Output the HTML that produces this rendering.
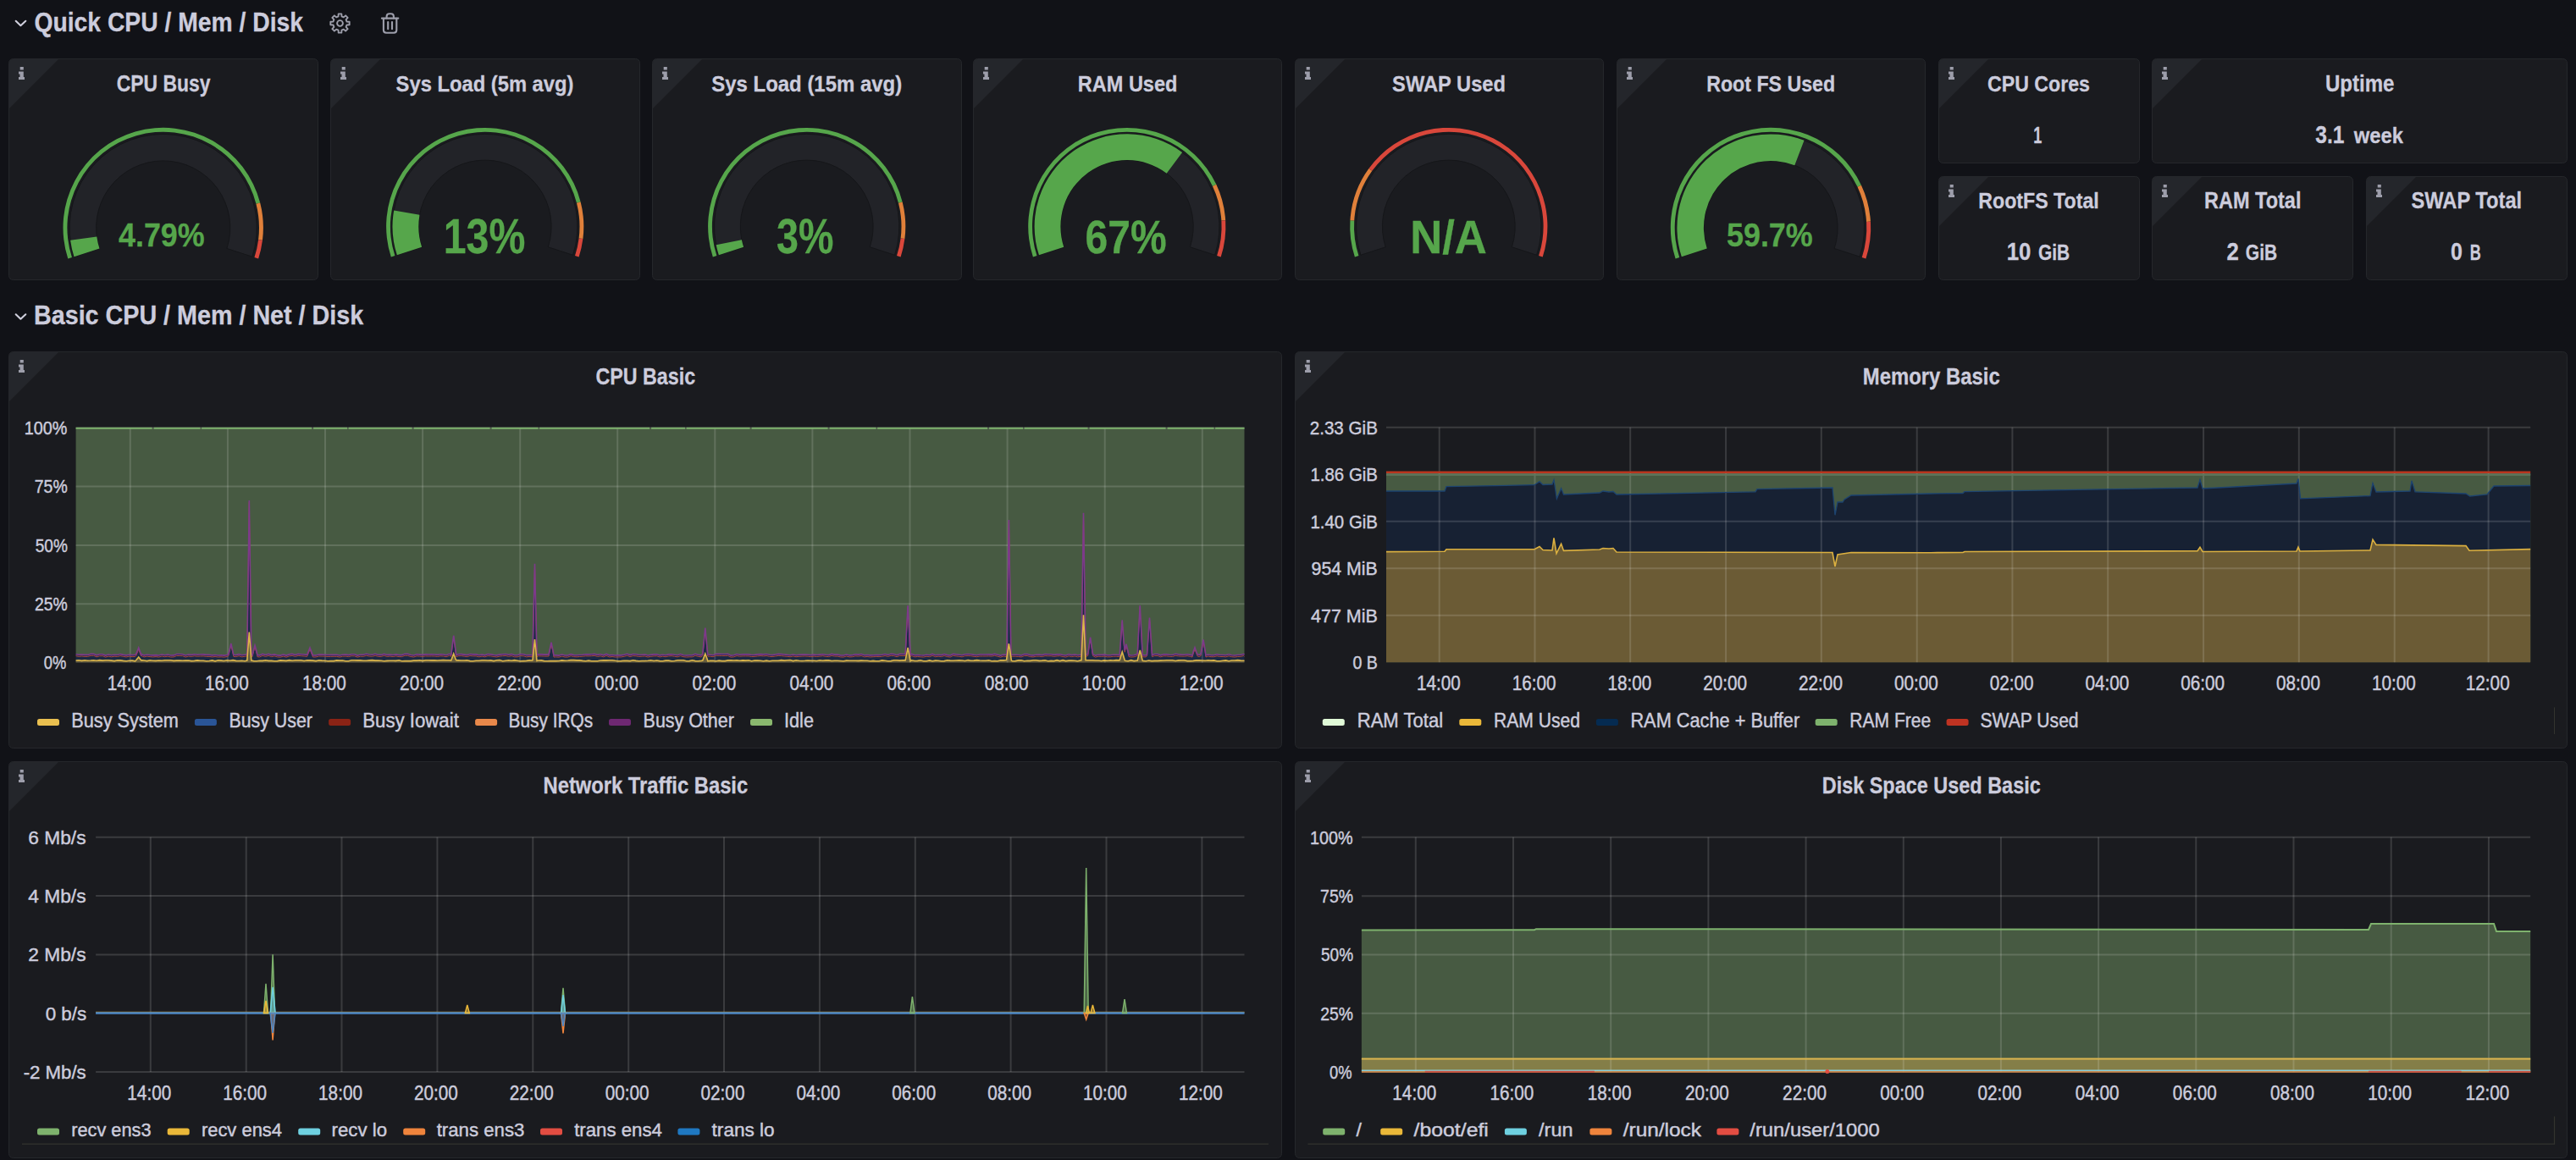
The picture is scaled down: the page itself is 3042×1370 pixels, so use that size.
<!DOCTYPE html>
<html><head><meta charset="utf-8"><style>
html,body{margin:0;padding:0;background:#111217;width:3042px;height:1370px;overflow:hidden}
svg{display:block;font-family:"Liberation Sans",sans-serif}
</style></head><body>
<svg width="3042" height="1370" viewBox="0 0 3042 1370">
<rect width="3042" height="1370" fill="#111217"/>
<path d="M18.7 24.8 L24.4 30.2 L30.3 24.8" fill="none" stroke="#d0d0de" stroke-width="2.1" stroke-linecap="round" stroke-linejoin="round"/>
<text transform="translate(40.40,37.00) scale(0.8975,1)" font-size="31.54" font-weight="bold" fill="#ccccdc" stroke="#ccccdc" stroke-width="0.3">Quick CPU / Mem / Disk</text>
<path d="M18.7 371.3 L24.4 376.7 L30.3 371.3" fill="none" stroke="#d0d0de" stroke-width="2.1" stroke-linecap="round" stroke-linejoin="round"/>
<text transform="translate(40.00,383.30) scale(0.9274,1)" font-size="30.96" font-weight="bold" fill="#ccccdc" stroke="#ccccdc" stroke-width="0.3">Basic CPU / Mem / Net / Disk</text>
<path d="M399.53 19.44 L399.70 16.34 L403.30 16.34 L403.47 19.44 L405.81 20.40 L408.12 18.34 L410.66 20.88 L408.60 23.19 L409.56 25.53 L412.66 25.70 L412.66 29.30 L409.56 29.47 L408.60 31.81 L410.66 34.12 L408.12 36.66 L405.81 34.60 L403.47 35.56 L403.30 38.66 L399.70 38.66 L399.53 35.56 L397.19 34.60 L394.88 36.66 L392.34 34.12 L394.40 31.81 L393.44 29.47 L390.34 29.30 L390.34 25.70 L393.44 25.53 L394.40 23.19 L392.34 20.88 L394.88 18.34 L397.19 20.40Z" fill="none" stroke="#9d9eab" stroke-width="1.9" stroke-linejoin="round"/>
<circle cx="401.5" cy="27.5" r="3.4" fill="none" stroke="#9d9eab" stroke-width="1.9"/>
<g fill="none" stroke="#9d9eab" stroke-width="2.1" stroke-linecap="round" stroke-linejoin="round"><path d="M450.9 21.6 H470.3"/><path d="M456.6 21.4 V19.5 Q456.6 16.3 459.8 16.3 H461.7 Q464.9 16.3 464.9 19.5 V21.4"/><path d="M452.9 21.8 V35.6 Q452.9 38.8 456.1 38.8 H465.1 Q468.3 38.8 468.3 35.6 V21.8"/><path d="M458.2 26 V34.2 M463 26 V34.2"/></g>
<rect x="10.5" y="69.5" width="365" height="261" rx="5" fill="#1a1b1f" stroke="#25272b" stroke-width="1"/>
<path d="M11 74 Q11 70 15 70 L69 70 L11 128 Z" fill="#24262b"/>
<path d="M23.7 79.1h4.1v3.3h-4.1z M22 84.5h5.8v6.5h1.2v3h-7v-3h1.5v-3.5h-1.5z" fill="#9d9eab"/>
<rect x="390.5" y="69.5" width="365" height="261" rx="5" fill="#1a1b1f" stroke="#25272b" stroke-width="1"/>
<path d="M391 74 Q391 70 395 70 L449 70 L391 128 Z" fill="#24262b"/>
<path d="M403.7 79.1h4.1v3.3h-4.1z M402 84.5h5.8v6.5h1.2v3h-7v-3h1.5v-3.5h-1.5z" fill="#9d9eab"/>
<rect x="770.5" y="69.5" width="365" height="261" rx="5" fill="#1a1b1f" stroke="#25272b" stroke-width="1"/>
<path d="M771 74 Q771 70 775 70 L829 70 L771 128 Z" fill="#24262b"/>
<path d="M783.7 79.1h4.1v3.3h-4.1z M782 84.5h5.8v6.5h1.2v3h-7v-3h1.5v-3.5h-1.5z" fill="#9d9eab"/>
<rect x="1149.5" y="69.5" width="364" height="261" rx="5" fill="#1a1b1f" stroke="#25272b" stroke-width="1"/>
<path d="M1150 74 Q1150 70 1154 70 L1208 70 L1150 128 Z" fill="#24262b"/>
<path d="M1162.7 79.1h4.1v3.3h-4.1z M1161 84.5h5.8v6.5h1.2v3h-7v-3h1.5v-3.5h-1.5z" fill="#9d9eab"/>
<rect x="1529.5" y="69.5" width="364" height="261" rx="5" fill="#1a1b1f" stroke="#25272b" stroke-width="1"/>
<path d="M1530 74 Q1530 70 1534 70 L1588 70 L1530 128 Z" fill="#24262b"/>
<path d="M1542.7 79.1h4.1v3.3h-4.1z M1541 84.5h5.8v6.5h1.2v3h-7v-3h1.5v-3.5h-1.5z" fill="#9d9eab"/>
<rect x="1909.5" y="69.5" width="364" height="261" rx="5" fill="#1a1b1f" stroke="#25272b" stroke-width="1"/>
<path d="M1910 74 Q1910 70 1914 70 L1968 70 L1910 128 Z" fill="#24262b"/>
<path d="M1922.7 79.1h4.1v3.3h-4.1z M1921 84.5h5.8v6.5h1.2v3h-7v-3h1.5v-3.5h-1.5z" fill="#9d9eab"/>
<rect x="2289.5" y="69.5" width="237" height="123" rx="5" fill="#1a1b1f" stroke="#25272b" stroke-width="1"/>
<path d="M2290 74 Q2290 70 2294 70 L2348 70 L2290 128 Z" fill="#24262b"/>
<path d="M2302.7 79.1h4.1v3.3h-4.1z M2301 84.5h5.8v6.5h1.2v3h-7v-3h1.5v-3.5h-1.5z" fill="#9d9eab"/>
<rect x="2541.5" y="69.5" width="490" height="123" rx="5" fill="#1a1b1f" stroke="#25272b" stroke-width="1"/>
<path d="M2542 74 Q2542 70 2546 70 L2600 70 L2542 128 Z" fill="#24262b"/>
<path d="M2554.7 79.1h4.1v3.3h-4.1z M2553 84.5h5.8v6.5h1.2v3h-7v-3h1.5v-3.5h-1.5z" fill="#9d9eab"/>
<rect x="2289.5" y="208.5" width="237" height="122" rx="5" fill="#1a1b1f" stroke="#25272b" stroke-width="1"/>
<path d="M2290 213 Q2290 209 2294 209 L2348 209 L2290 267 Z" fill="#24262b"/>
<path d="M2302.7 218.1h4.1v3.3h-4.1z M2301 223.5h5.8v6.5h1.2v3h-7v-3h1.5v-3.5h-1.5z" fill="#9d9eab"/>
<rect x="2541.5" y="208.5" width="237" height="122" rx="5" fill="#1a1b1f" stroke="#25272b" stroke-width="1"/>
<path d="M2542 213 Q2542 209 2546 209 L2600 209 L2542 267 Z" fill="#24262b"/>
<path d="M2554.7 218.1h4.1v3.3h-4.1z M2553 223.5h5.8v6.5h1.2v3h-7v-3h1.5v-3.5h-1.5z" fill="#9d9eab"/>
<rect x="2794.5" y="208.5" width="237" height="122" rx="5" fill="#1a1b1f" stroke="#25272b" stroke-width="1"/>
<path d="M2795 213 Q2795 209 2799 209 L2853 209 L2795 267 Z" fill="#24262b"/>
<path d="M2807.7 218.1h4.1v3.3h-4.1z M2806 223.5h5.8v6.5h1.2v3h-7v-3h1.5v-3.5h-1.5z" fill="#9d9eab"/>
<text transform="translate(137.80,107.70) scale(0.8515,1)" font-size="26.89" font-weight="bold" fill="#ccccdc" stroke="#ccccdc" stroke-width="0.3">CPU Busy</text>
<text transform="translate(467.60,107.50) scale(0.8985,1)" font-size="26.45" font-weight="bold" fill="#ccccdc" stroke="#ccccdc" stroke-width="0.3">Sys Load (5m avg)</text>
<text transform="translate(840.30,107.50) scale(0.9058,1)" font-size="26.45" font-weight="bold" fill="#ccccdc" stroke="#ccccdc" stroke-width="0.3">Sys Load (15m avg)</text>
<text transform="translate(1272.80,107.50) scale(0.8898,1)" font-size="26.45" font-weight="bold" fill="#ccccdc" stroke="#ccccdc" stroke-width="0.3">RAM Used</text>
<text transform="translate(1644.10,107.50) scale(0.8959,1)" font-size="26.45" font-weight="bold" fill="#ccccdc" stroke="#ccccdc" stroke-width="0.3">SWAP Used</text>
<text transform="translate(2015.20,107.50) scale(0.8771,1)" font-size="26.45" font-weight="bold" fill="#ccccdc" stroke="#ccccdc" stroke-width="0.3">Root FS Used</text>
<text transform="translate(2347.00,108.00) scale(0.8851,1)" font-size="26.16" font-weight="bold" fill="#ccccdc" stroke="#ccccdc" stroke-width="0.3">CPU Cores</text>
<text transform="translate(2745.90,108.10) scale(0.8670,1)" font-size="27.76" font-weight="bold" fill="#ccccdc" stroke="#ccccdc" stroke-width="0.3">Uptime</text>
<text transform="translate(2336.25,245.75) scale(0.8742,1)" font-size="26.53" font-weight="bold" fill="#ccccdc" stroke="#ccccdc" stroke-width="0.3">RootFS Total</text>
<text transform="translate(2603.00,246.20) scale(0.8469,1)" font-size="27.76" font-weight="bold" fill="#ccccdc" stroke="#ccccdc" stroke-width="0.3">RAM Total</text>
<text transform="translate(2847.50,245.75) scale(0.8691,1)" font-size="27.25" font-weight="bold" fill="#ccccdc" stroke="#ccccdc" stroke-width="0.3">SWAP Total</text>
<text transform="translate(2401.25,168.75) scale(0.6440,1)" font-size="27.98" font-weight="bold" fill="#ccccdc" stroke="#ccccdc" stroke-width="0.3">1</text>
<text transform="translate(2734.20,169.00) scale(0.8339,1)" font-size="29.51" font-weight="bold" fill="#ccccdc" stroke="#ccccdc" stroke-width="0.3">3.1</text>
<text transform="translate(2779.72,169.00) scale(0.9092,1)" font-size="26.16" font-weight="bold" fill="#ccccdc" stroke="#ccccdc" stroke-width="0.3">week</text>
<text transform="translate(2369.70,307.00) scale(0.8806,1)" font-size="29.36" font-weight="bold" fill="#ccccdc" stroke="#ccccdc" stroke-width="0.3">10</text>
<text transform="translate(2407.00,307.00) scale(0.8033,1)" font-size="26.02" font-weight="bold" fill="#ccccdc" stroke="#ccccdc" stroke-width="0.3">GiB</text>
<text transform="translate(2629.50,307.40) scale(0.8689,1)" font-size="29.65" font-weight="bold" fill="#ccccdc" stroke="#ccccdc" stroke-width="0.3">2</text>
<text transform="translate(2651.80,307.40) scale(0.7899,1)" font-size="26.60" font-weight="bold" fill="#ccccdc" stroke="#ccccdc" stroke-width="0.3">GiB</text>
<text transform="translate(2894.00,307.00) scale(0.8530,1)" font-size="29.36" font-weight="bold" fill="#ccccdc" stroke="#ccccdc" stroke-width="0.3">0</text>
<text transform="translate(2916.80,307.00) scale(0.6901,1)" font-size="26.16" font-weight="bold" fill="#ccccdc" stroke="#ccccdc" stroke-width="0.3">B</text>
<path d="M87.51 303.18 A110.6 110.6 0 1 1 297.89 303.18 L267.93 293.44 A79.1 79.1 0 1 0 117.47 293.44Z" fill="#222328" stroke="#151619" stroke-width="1"/>
<path d="M80.29 305.53 A118.2 118.2 0 1 1 307.19 239.60 L302.44 240.82 A113.3 113.3 0 1 0 84.95 304.01Z" fill="#56a64b"/>
<path d="M307.19 239.60 A118.2 118.2 0 0 1 309.97 283.81 L305.11 283.20 A113.3 113.3 0 0 0 302.44 240.82Z" fill="#e0803a"/>
<path d="M309.97 283.81 A118.2 118.2 0 0 1 305.11 305.53 L300.45 304.01 A113.3 113.3 0 0 0 305.11 283.20Z" fill="#d9473b"/>
<path d="M87.51 303.18 A110.6 110.6 0 0 1 83.09 283.73 L114.30 279.53 A79.1 79.1 0 0 0 117.47 293.44Z" fill="#56a64b"/>
<path d="M468.84 301.24 A109.2 109.2 0 1 1 676.56 301.24 L647.26 291.73 A78.4 78.4 0 1 0 498.14 291.73Z" fill="#222328" stroke="#151619" stroke-width="1"/>
<path d="M461.81 303.53 A116.6 116.6 0 1 1 685.64 238.50 L680.99 239.70 A111.8 111.8 0 1 0 466.37 302.05Z" fill="#56a64b"/>
<path d="M685.64 238.50 A116.6 116.6 0 0 1 688.38 282.11 L683.62 281.51 A111.8 111.8 0 0 0 680.99 239.70Z" fill="#e0803a"/>
<path d="M688.38 282.11 A116.6 116.6 0 0 1 683.59 303.53 L679.03 302.05 A111.8 111.8 0 0 0 683.62 281.51Z" fill="#d9473b"/>
<path d="M468.84 301.24 A109.2 109.2 0 0 1 465.19 248.39 L495.51 253.78 A78.4 78.4 0 0 0 498.14 291.73Z" fill="#56a64b"/>
<path d="M848.84 301.24 A109.2 109.2 0 1 1 1056.56 301.24 L1027.26 291.73 A78.4 78.4 0 1 0 878.14 291.73Z" fill="#222328" stroke="#151619" stroke-width="1"/>
<path d="M841.81 303.53 A116.6 116.6 0 1 1 1065.64 238.50 L1060.99 239.70 A111.8 111.8 0 1 0 846.37 302.05Z" fill="#56a64b"/>
<path d="M1065.64 238.50 A116.6 116.6 0 0 1 1068.38 282.11 L1063.62 281.51 A111.8 111.8 0 0 0 1060.99 239.70Z" fill="#e0803a"/>
<path d="M1068.38 282.11 A116.6 116.6 0 0 1 1063.59 303.53 L1059.03 302.05 A111.8 111.8 0 0 0 1063.62 281.51Z" fill="#d9473b"/>
<path d="M848.84 301.24 A109.2 109.2 0 0 1 845.70 289.31 L875.88 283.16 A78.4 78.4 0 0 0 878.14 291.73Z" fill="#56a64b"/>
<path d="M1226.94 301.24 A109.2 109.2 0 1 1 1434.66 301.24 L1405.36 291.73 A78.4 78.4 0 1 0 1256.24 291.73Z" fill="#222328" stroke="#151619" stroke-width="1"/>
<path d="M1219.91 303.53 A116.6 116.6 0 0 1 1436.30 217.85 L1431.96 219.90 A111.8 111.8 0 0 0 1224.47 302.05Z" fill="#56a64b"/>
<path d="M1436.30 217.85 A116.6 116.6 0 0 1 1447.17 260.18 L1442.38 260.48 A111.8 111.8 0 0 0 1431.96 219.90Z" fill="#e0803a"/>
<path d="M1447.17 260.18 A116.6 116.6 0 0 1 1441.69 303.53 L1437.13 302.05 A111.8 111.8 0 0 0 1442.38 260.48Z" fill="#d9473b"/>
<path d="M1226.94 301.24 A109.2 109.2 0 0 1 1396.09 179.97 L1377.68 204.66 A78.4 78.4 0 0 0 1256.24 291.73Z" fill="#56a64b"/>
<path d="M1606.94 301.24 A109.2 109.2 0 1 1 1814.66 301.24 L1785.36 291.73 A78.4 78.4 0 1 0 1636.24 291.73Z" fill="#222328" stroke="#151619" stroke-width="1"/>
<path d="M1599.91 303.53 A116.6 116.6 0 0 1 1594.43 260.18 L1599.22 260.48 A111.8 111.8 0 0 0 1604.47 302.05Z" fill="#56a64b"/>
<path d="M1594.43 260.18 A116.6 116.6 0 0 1 1616.47 198.96 L1620.35 201.79 A111.8 111.8 0 0 0 1599.22 260.48Z" fill="#e0803a"/>
<path d="M1616.47 198.96 A116.6 116.6 0 0 1 1821.69 303.53 L1817.13 302.05 A111.8 111.8 0 0 0 1620.35 201.79Z" fill="#d9473b"/>
<path d="M1985.81 303.18 A110.6 110.6 0 1 1 2196.19 303.18 L2166.23 293.44 A79.1 79.1 0 1 0 2015.77 293.44Z" fill="#222328" stroke="#151619" stroke-width="1"/>
<path d="M1978.59 305.53 A118.2 118.2 0 0 1 2197.95 218.67 L2193.52 220.76 A113.3 113.3 0 0 0 1983.25 304.01Z" fill="#56a64b"/>
<path d="M2197.95 218.67 A118.2 118.2 0 0 1 2208.97 261.58 L2204.08 261.89 A113.3 113.3 0 0 0 2193.52 220.76Z" fill="#e0803a"/>
<path d="M2208.97 261.58 A118.2 118.2 0 0 1 2203.41 305.53 L2198.75 304.01 A113.3 113.3 0 0 0 2204.08 261.89Z" fill="#d9473b"/>
<path d="M1985.81 303.18 A110.6 110.6 0 0 1 2130.55 165.71 L2119.29 195.13 A79.1 79.1 0 0 0 2015.77 293.44Z" fill="#56a64b"/>
<text transform="translate(140.00,290.60) scale(0.9141,1)" font-size="39.24" font-weight="bold" fill="#56a64b" stroke="#56a64b" stroke-width="0.3">4.79%</text>
<text transform="translate(523.80,299.20) scale(0.8481,1)" font-size="56.83" font-weight="bold" fill="#56a64b" stroke="#56a64b" stroke-width="0.3">13%</text>
<text transform="translate(917.00,299.20) scale(0.8174,1)" font-size="56.98" font-weight="bold" fill="#56a64b" stroke="#56a64b" stroke-width="0.3">3%</text>
<text transform="translate(1281.50,298.90) scale(0.8600,1)" font-size="55.81" font-weight="bold" fill="#56a64b" stroke="#56a64b" stroke-width="0.3">67%</text>
<text transform="translate(1665.20,298.90) scale(0.9437,1)" font-size="55.81" font-weight="bold" fill="#56a64b" stroke="#56a64b" stroke-width="0.3">N/A</text>
<text transform="translate(2039.00,290.60) scale(0.9150,1)" font-size="39.24" font-weight="bold" fill="#56a64b" stroke="#56a64b" stroke-width="0.3">59.7%</text>
<rect x="10.5" y="415.5" width="1503" height="468" rx="5" fill="#1a1b1f" stroke="#25272b" stroke-width="1"/>
<path d="M11 420 Q11 416 15 416 L69 416 L11 474 Z" fill="#24262b"/>
<path d="M23.7 425.1h4.1v3.3h-4.1z M22 430.5h5.8v6.5h1.2v3h-7v-3h1.5v-3.5h-1.5z" fill="#9d9eab"/>
<rect x="1529.5" y="415.5" width="1502" height="468" rx="5" fill="#1a1b1f" stroke="#25272b" stroke-width="1"/>
<path d="M1530 420 Q1530 416 1534 416 L1588 416 L1530 474 Z" fill="#24262b"/>
<path d="M1542.7 425.1h4.1v3.3h-4.1z M1541 430.5h5.8v6.5h1.2v3h-7v-3h1.5v-3.5h-1.5z" fill="#9d9eab"/>
<rect x="10.5" y="899.5" width="1503" height="468" rx="5" fill="#1a1b1f" stroke="#25272b" stroke-width="1"/>
<path d="M11 904 Q11 900 15 900 L69 900 L11 958 Z" fill="#24262b"/>
<path d="M23.7 909.1h4.1v3.3h-4.1z M22 914.5h5.8v6.5h1.2v3h-7v-3h1.5v-3.5h-1.5z" fill="#9d9eab"/>
<rect x="1529.5" y="899.5" width="1502" height="468" rx="5" fill="#1a1b1f" stroke="#25272b" stroke-width="1"/>
<path d="M1530 904 Q1530 900 1534 900 L1588 900 L1530 958 Z" fill="#24262b"/>
<path d="M1542.7 909.1h4.1v3.3h-4.1z M1541 914.5h5.8v6.5h1.2v3h-7v-3h1.5v-3.5h-1.5z" fill="#9d9eab"/>
<text transform="translate(703.40,454.10) scale(0.8386,1)" font-size="27.76" font-weight="bold" fill="#ccccdc" stroke="#ccccdc" stroke-width="0.3">CPU Basic</text>
<text transform="translate(2199.80,453.90) scale(0.8739,1)" font-size="27.33" font-weight="bold" fill="#ccccdc" stroke="#ccccdc" stroke-width="0.3">Memory Basic</text>
<text transform="translate(641.50,936.80) scale(0.8751,1)" font-size="27.18" font-weight="bold" fill="#ccccdc" stroke="#ccccdc" stroke-width="0.3">Network Traffic Basic</text>
<text transform="translate(2151.70,937.10) scale(0.8583,1)" font-size="27.33" font-weight="bold" fill="#ccccdc" stroke="#ccccdc" stroke-width="0.3">Disk Space Used Basic</text>
<polygon points="89.6,505.2 89.6,772.7 93.1,773.3 96.6,773.0 100.1,773.4 103.6,773.4 107.1,772.4 110.6,772.3 114.1,773.8 117.6,772.8 121.1,772.7 124.6,774.1 128.1,773.1 131.6,773.8 135.1,773.2 138.6,773.5 142.1,772.6 145.6,773.4 149.1,773.9 152.6,773.2 156.1,773.6 159.6,773.5 160.7,772.4 163.1,766.6 163.7,765.0 166.6,772.8 166.7,772.4 170.1,773.9 173.6,773.2 177.1,773.6 180.6,773.9 184.1,773.6 187.6,774.0 191.1,773.0 194.6,773.7 198.1,773.1 201.6,774.0 205.1,773.9 208.6,772.5 212.1,772.5 215.6,772.7 219.1,774.0 222.6,773.1 226.1,773.4 229.6,772.8 233.1,773.2 236.6,773.0 240.1,772.9 243.6,773.4 247.1,773.4 250.6,773.9 254.1,773.5 257.6,774.0 261.1,773.8 264.6,774.1 268.1,773.5 269.8,772.6 271.6,765.3 272.8,760.0 275.1,770.1 275.8,773.3 278.6,773.6 282.1,772.7 285.6,773.8 289.1,773.3 291.8,772.8 292.6,714.9 294.3,590.9 296.1,722.2 296.8,772.5 298.0,773.7 299.6,767.2 301.0,762.0 303.1,769.8 304.0,773.7 306.6,773.9 310.1,772.4 313.6,773.4 317.1,772.4 320.6,773.6 324.1,772.9 327.6,773.9 331.1,774.1 334.6,773.2 338.1,774.1 341.6,772.9 345.1,772.4 348.6,773.4 352.1,772.4 355.6,772.7 359.1,773.0 362.6,773.4 363.0,772.6 366.0,765.0 366.1,765.3 369.0,772.9 369.6,774.0 373.1,773.9 376.6,773.0 380.1,773.1 383.6,773.2 387.1,773.5 390.6,773.4 394.1,773.3 397.6,773.4 401.1,774.0 404.6,773.2 408.1,773.1 411.6,773.6 415.1,772.7 418.6,772.8 422.1,774.1 425.6,773.2 429.1,773.3 432.6,772.3 436.1,773.0 439.6,773.3 443.1,772.3 446.6,773.4 450.1,773.4 453.6,772.4 457.1,773.4 460.6,773.1 464.1,773.5 467.6,772.9 471.1,773.6 474.6,773.6 478.1,772.3 481.6,772.4 485.1,773.5 488.6,774.0 492.1,772.8 495.6,773.1 499.1,773.4 502.6,772.9 506.1,773.0 509.6,772.9 513.1,773.0 516.6,773.4 520.1,772.8 523.6,773.0 527.1,773.7 530.6,772.3 532.7,773.3 534.1,762.7 535.7,750.6 537.6,764.9 538.7,773.7 541.1,772.7 544.6,772.6 548.1,773.1 551.6,773.6 555.1,772.5 558.6,772.9 562.1,772.9 565.6,773.8 569.1,773.1 572.6,773.8 576.1,772.6 579.6,772.9 583.1,773.5 586.6,773.9 590.1,773.1 593.6,772.7 597.1,772.5 600.6,773.3 604.1,772.6 607.6,773.8 611.1,773.8 614.6,772.6 618.1,772.8 621.6,773.8 625.1,773.5 628.6,773.8 629.0,772.9 631.5,665.7 632.1,691.5 634.0,773.7 635.6,772.8 639.1,772.9 642.6,773.1 646.1,773.1 648.0,773.0 649.6,765.5 651.0,758.7 653.1,768.9 654.0,774.0 656.6,773.9 660.1,774.1 663.6,773.1 667.1,774.0 670.6,774.0 674.1,772.7 677.6,773.6 681.1,773.8 684.6,773.5 688.1,773.2 691.6,772.8 695.1,772.9 698.6,772.7 702.1,772.4 705.6,773.4 709.1,772.8 712.6,773.8 716.1,772.4 719.6,773.9 723.1,773.5 726.6,774.0 730.1,773.9 733.6,773.9 737.1,773.3 740.6,772.3 744.1,773.6 747.6,772.6 751.1,772.8 754.6,773.5 758.1,773.2 761.6,773.0 765.1,774.0 768.6,773.4 772.1,772.9 775.6,772.8 779.1,773.9 782.6,773.2 786.1,773.7 789.6,772.9 793.1,772.7 796.6,773.3 800.1,773.8 803.6,772.6 807.1,773.7 810.6,774.0 814.1,773.8 817.6,773.8 821.1,772.3 824.6,773.4 828.1,773.9 829.8,772.4 831.6,754.3 832.8,741.7 835.1,765.9 835.8,773.1 838.6,773.2 842.1,773.7 845.6,772.3 849.1,772.4 852.6,772.5 856.1,772.5 859.6,772.4 863.1,774.1 866.6,773.8 870.1,772.5 873.6,773.2 877.1,772.9 880.6,772.9 884.1,772.9 887.6,773.5 891.1,773.4 894.6,772.9 898.1,772.6 901.6,772.9 905.1,772.5 908.6,773.3 912.1,773.6 915.6,773.0 919.1,772.4 922.6,772.6 926.1,773.0 929.6,773.4 933.1,773.7 936.6,773.0 940.1,773.7 943.6,773.4 947.1,773.1 950.6,773.0 954.1,773.2 957.6,773.6 961.1,773.1 964.6,773.5 968.1,773.1 971.6,772.7 975.1,773.3 978.6,773.6 982.1,772.4 985.6,773.1 989.1,773.1 992.6,773.9 996.1,774.0 999.6,773.0 1003.1,773.9 1006.6,773.7 1010.1,772.8 1013.6,773.1 1017.1,772.5 1020.6,773.8 1024.1,773.5 1027.6,773.9 1031.1,773.7 1034.6,773.5 1038.1,773.6 1041.6,773.3 1045.1,772.5 1048.6,773.4 1052.1,772.3 1055.6,772.6 1059.1,773.7 1062.6,772.4 1066.1,772.5 1069.1,772.5 1069.6,763.5 1072.1,715.0 1073.1,734.4 1075.1,773.8 1076.6,772.5 1080.1,773.8 1083.6,773.5 1087.1,773.8 1090.6,774.0 1094.1,773.3 1097.6,773.7 1101.1,772.4 1104.6,773.7 1108.1,773.2 1111.6,773.6 1115.1,772.5 1118.6,773.6 1122.1,774.0 1125.6,772.4 1129.1,772.9 1132.6,773.3 1136.1,773.8 1139.6,772.7 1143.1,772.6 1146.6,772.7 1150.1,773.4 1153.6,773.7 1157.1,773.0 1160.6,773.0 1164.1,773.0 1167.6,772.9 1171.1,773.1 1174.6,772.4 1178.1,773.2 1181.6,774.1 1185.1,773.0 1188.6,773.6 1188.9,772.6 1191.4,613.9 1192.1,658.5 1193.9,773.5 1195.6,773.2 1199.1,773.2 1202.6,773.5 1206.1,773.9 1209.6,772.6 1213.1,772.5 1216.6,773.6 1220.1,773.9 1223.6,773.2 1227.1,773.1 1230.6,773.6 1234.1,772.6 1237.6,772.8 1241.1,772.7 1244.6,773.4 1248.1,772.9 1251.6,772.7 1255.1,773.5 1258.6,774.0 1262.1,772.8 1265.6,773.6 1269.1,773.0 1272.6,773.8 1276.1,773.4 1277.0,772.8 1279.5,605.8 1279.6,612.5 1282.0,773.2 1283.1,773.0 1284.6,772.6 1286.6,759.5 1287.6,752.6 1290.1,769.8 1290.6,772.6 1293.6,774.1 1297.1,773.2 1300.6,773.4 1304.1,773.1 1307.6,773.8 1311.1,773.8 1314.6,773.3 1318.1,773.2 1321.6,773.6 1322.2,773.8 1325.1,733.8 1325.2,732.4 1327.0,756.9 1328.2,768.2 1328.6,766.5 1330.0,760.7 1332.1,769.4 1333.0,773.5 1335.6,774.0 1339.1,773.8 1342.6,772.7 1343.2,772.6 1346.1,716.9 1346.2,715.0 1349.2,773.6 1349.6,773.8 1353.1,773.9 1354.5,772.8 1356.6,742.6 1357.5,729.5 1360.1,767.4 1360.5,773.6 1363.6,772.5 1367.1,772.5 1370.6,773.8 1374.1,772.8 1377.6,772.9 1381.1,773.3 1384.6,773.5 1388.1,772.3 1391.6,772.9 1395.1,773.1 1398.6,773.2 1402.1,772.7 1405.6,773.4 1408.0,774.0 1409.1,770.1 1411.0,764.7 1412.6,769.2 1414.0,772.8 1416.1,773.5 1418.0,772.5 1419.6,763.7 1421.0,755.4 1423.1,767.9 1424.0,774.0 1426.6,773.0 1430.1,773.7 1433.6,773.7 1437.1,772.8 1440.6,773.5 1444.1,773.5 1447.6,773.8 1451.1,772.8 1454.6,773.7 1458.1,774.0 1461.6,773.5 1465.1,773.3 1468.6,772.5 1469.5,773.2 1469.5,505.2" fill="#475a42"/>
<polygon points="89.6,772.7 93.1,773.3 96.6,773.0 100.1,773.4 103.6,773.4 107.1,772.4 110.6,772.3 114.1,773.8 117.6,772.8 121.1,772.7 124.6,774.1 128.1,773.1 131.6,773.8 135.1,773.2 138.6,773.5 142.1,772.6 145.6,773.4 149.1,773.9 152.6,773.2 156.1,773.6 159.6,773.5 160.7,772.4 163.1,766.6 163.7,765.0 166.6,772.8 166.7,772.4 170.1,773.9 173.6,773.2 177.1,773.6 180.6,773.9 184.1,773.6 187.6,774.0 191.1,773.0 194.6,773.7 198.1,773.1 201.6,774.0 205.1,773.9 208.6,772.5 212.1,772.5 215.6,772.7 219.1,774.0 222.6,773.1 226.1,773.4 229.6,772.8 233.1,773.2 236.6,773.0 240.1,772.9 243.6,773.4 247.1,773.4 250.6,773.9 254.1,773.5 257.6,774.0 261.1,773.8 264.6,774.1 268.1,773.5 269.8,772.6 271.6,765.3 272.8,760.0 275.1,770.1 275.8,773.3 278.6,773.6 282.1,772.7 285.6,773.8 289.1,773.3 291.8,772.8 292.6,714.9 294.3,590.9 296.1,722.2 296.8,772.5 298.0,773.7 299.6,767.2 301.0,762.0 303.1,769.8 304.0,773.7 306.6,773.9 310.1,772.4 313.6,773.4 317.1,772.4 320.6,773.6 324.1,772.9 327.6,773.9 331.1,774.1 334.6,773.2 338.1,774.1 341.6,772.9 345.1,772.4 348.6,773.4 352.1,772.4 355.6,772.7 359.1,773.0 362.6,773.4 363.0,772.6 366.0,765.0 366.1,765.3 369.0,772.9 369.6,774.0 373.1,773.9 376.6,773.0 380.1,773.1 383.6,773.2 387.1,773.5 390.6,773.4 394.1,773.3 397.6,773.4 401.1,774.0 404.6,773.2 408.1,773.1 411.6,773.6 415.1,772.7 418.6,772.8 422.1,774.1 425.6,773.2 429.1,773.3 432.6,772.3 436.1,773.0 439.6,773.3 443.1,772.3 446.6,773.4 450.1,773.4 453.6,772.4 457.1,773.4 460.6,773.1 464.1,773.5 467.6,772.9 471.1,773.6 474.6,773.6 478.1,772.3 481.6,772.4 485.1,773.5 488.6,774.0 492.1,772.8 495.6,773.1 499.1,773.4 502.6,772.9 506.1,773.0 509.6,772.9 513.1,773.0 516.6,773.4 520.1,772.8 523.6,773.0 527.1,773.7 530.6,772.3 532.7,773.3 534.1,762.7 535.7,750.6 537.6,764.9 538.7,773.7 541.1,772.7 544.6,772.6 548.1,773.1 551.6,773.6 555.1,772.5 558.6,772.9 562.1,772.9 565.6,773.8 569.1,773.1 572.6,773.8 576.1,772.6 579.6,772.9 583.1,773.5 586.6,773.9 590.1,773.1 593.6,772.7 597.1,772.5 600.6,773.3 604.1,772.6 607.6,773.8 611.1,773.8 614.6,772.6 618.1,772.8 621.6,773.8 625.1,773.5 628.6,773.8 629.0,772.9 631.5,665.7 632.1,691.5 634.0,773.7 635.6,772.8 639.1,772.9 642.6,773.1 646.1,773.1 648.0,773.0 649.6,765.5 651.0,758.7 653.1,768.9 654.0,774.0 656.6,773.9 660.1,774.1 663.6,773.1 667.1,774.0 670.6,774.0 674.1,772.7 677.6,773.6 681.1,773.8 684.6,773.5 688.1,773.2 691.6,772.8 695.1,772.9 698.6,772.7 702.1,772.4 705.6,773.4 709.1,772.8 712.6,773.8 716.1,772.4 719.6,773.9 723.1,773.5 726.6,774.0 730.1,773.9 733.6,773.9 737.1,773.3 740.6,772.3 744.1,773.6 747.6,772.6 751.1,772.8 754.6,773.5 758.1,773.2 761.6,773.0 765.1,774.0 768.6,773.4 772.1,772.9 775.6,772.8 779.1,773.9 782.6,773.2 786.1,773.7 789.6,772.9 793.1,772.7 796.6,773.3 800.1,773.8 803.6,772.6 807.1,773.7 810.6,774.0 814.1,773.8 817.6,773.8 821.1,772.3 824.6,773.4 828.1,773.9 829.8,772.4 831.6,754.3 832.8,741.7 835.1,765.9 835.8,773.1 838.6,773.2 842.1,773.7 845.6,772.3 849.1,772.4 852.6,772.5 856.1,772.5 859.6,772.4 863.1,774.1 866.6,773.8 870.1,772.5 873.6,773.2 877.1,772.9 880.6,772.9 884.1,772.9 887.6,773.5 891.1,773.4 894.6,772.9 898.1,772.6 901.6,772.9 905.1,772.5 908.6,773.3 912.1,773.6 915.6,773.0 919.1,772.4 922.6,772.6 926.1,773.0 929.6,773.4 933.1,773.7 936.6,773.0 940.1,773.7 943.6,773.4 947.1,773.1 950.6,773.0 954.1,773.2 957.6,773.6 961.1,773.1 964.6,773.5 968.1,773.1 971.6,772.7 975.1,773.3 978.6,773.6 982.1,772.4 985.6,773.1 989.1,773.1 992.6,773.9 996.1,774.0 999.6,773.0 1003.1,773.9 1006.6,773.7 1010.1,772.8 1013.6,773.1 1017.1,772.5 1020.6,773.8 1024.1,773.5 1027.6,773.9 1031.1,773.7 1034.6,773.5 1038.1,773.6 1041.6,773.3 1045.1,772.5 1048.6,773.4 1052.1,772.3 1055.6,772.6 1059.1,773.7 1062.6,772.4 1066.1,772.5 1069.1,772.5 1069.6,763.5 1072.1,715.0 1073.1,734.4 1075.1,773.8 1076.6,772.5 1080.1,773.8 1083.6,773.5 1087.1,773.8 1090.6,774.0 1094.1,773.3 1097.6,773.7 1101.1,772.4 1104.6,773.7 1108.1,773.2 1111.6,773.6 1115.1,772.5 1118.6,773.6 1122.1,774.0 1125.6,772.4 1129.1,772.9 1132.6,773.3 1136.1,773.8 1139.6,772.7 1143.1,772.6 1146.6,772.7 1150.1,773.4 1153.6,773.7 1157.1,773.0 1160.6,773.0 1164.1,773.0 1167.6,772.9 1171.1,773.1 1174.6,772.4 1178.1,773.2 1181.6,774.1 1185.1,773.0 1188.6,773.6 1188.9,772.6 1191.4,613.9 1192.1,658.5 1193.9,773.5 1195.6,773.2 1199.1,773.2 1202.6,773.5 1206.1,773.9 1209.6,772.6 1213.1,772.5 1216.6,773.6 1220.1,773.9 1223.6,773.2 1227.1,773.1 1230.6,773.6 1234.1,772.6 1237.6,772.8 1241.1,772.7 1244.6,773.4 1248.1,772.9 1251.6,772.7 1255.1,773.5 1258.6,774.0 1262.1,772.8 1265.6,773.6 1269.1,773.0 1272.6,773.8 1276.1,773.4 1277.0,772.8 1279.5,605.8 1279.6,612.5 1282.0,773.2 1283.1,773.0 1284.6,772.6 1286.6,759.5 1287.6,752.6 1290.1,769.8 1290.6,772.6 1293.6,774.1 1297.1,773.2 1300.6,773.4 1304.1,773.1 1307.6,773.8 1311.1,773.8 1314.6,773.3 1318.1,773.2 1321.6,773.6 1322.2,773.8 1325.1,733.8 1325.2,732.4 1327.0,756.9 1328.2,768.2 1328.6,766.5 1330.0,760.7 1332.1,769.4 1333.0,773.5 1335.6,774.0 1339.1,773.8 1342.6,772.7 1343.2,772.6 1346.1,716.9 1346.2,715.0 1349.2,773.6 1349.6,773.8 1353.1,773.9 1354.5,772.8 1356.6,742.6 1357.5,729.5 1360.1,767.4 1360.5,773.6 1363.6,772.5 1367.1,772.5 1370.6,773.8 1374.1,772.8 1377.6,772.9 1381.1,773.3 1384.6,773.5 1388.1,772.3 1391.6,772.9 1395.1,773.1 1398.6,773.2 1402.1,772.7 1405.6,773.4 1408.0,774.0 1409.1,770.1 1411.0,764.7 1412.6,769.2 1414.0,772.8 1416.1,773.5 1418.0,772.5 1419.6,763.7 1421.0,755.4 1423.1,767.9 1424.0,774.0 1426.6,773.0 1430.1,773.7 1433.6,773.7 1437.1,772.8 1440.6,773.5 1444.1,773.5 1447.6,773.8 1451.1,772.8 1454.6,773.7 1458.1,774.0 1461.6,773.5 1465.1,773.3 1468.6,772.5 1469.5,773.2 1469.5,782.5 89.6,782.5" fill="#1b2a45"/>
<polygon points="89.6,780.0 93.1,779.8 96.6,780.4 100.1,779.7 103.6,780.2 107.1,780.0 110.6,779.7 114.1,780.2 117.6,779.6 121.1,780.1 124.6,779.7 128.1,779.7 131.6,780.1 135.1,780.6 138.6,779.7 142.1,779.9 145.6,780.4 149.1,780.7 152.6,780.3 156.1,780.1 159.6,780.8 160.7,779.7 163.1,776.8 163.7,776.0 166.6,779.8 166.7,779.7 170.1,780.0 173.6,780.6 177.1,779.8 180.6,780.3 184.1,780.4 187.6,780.0 191.1,780.3 194.6,779.7 198.1,779.7 201.6,779.8 205.1,780.4 208.6,780.1 212.1,780.0 215.6,780.3 219.1,780.1 222.6,780.0 226.1,780.6 229.6,780.4 233.1,779.9 236.6,780.3 240.1,780.2 243.6,780.7 247.1,780.5 250.6,779.9 254.1,780.8 257.6,779.7 261.1,780.1 264.6,780.5 268.1,779.8 271.6,780.2 275.1,779.6 278.6,780.4 282.1,780.5 285.6,780.3 289.1,780.7 291.8,780.0 292.6,769.4 294.3,746.6 296.1,770.8 296.8,780.1 299.6,780.6 303.1,780.7 306.6,780.2 310.1,780.4 313.6,779.7 317.1,780.4 320.6,780.4 324.1,780.8 327.6,780.6 331.1,779.9 334.6,780.1 338.1,780.4 341.6,779.6 345.1,780.2 348.6,779.8 352.1,779.7 355.6,779.7 359.1,780.5 362.6,779.8 366.1,779.9 369.6,780.1 373.1,780.6 376.6,779.7 380.1,780.1 383.6,780.3 387.1,780.7 390.6,780.6 394.1,780.6 397.6,779.9 401.1,780.1 404.6,780.0 408.1,780.7 411.6,780.7 415.1,779.8 418.6,779.8 422.1,779.9 425.6,779.9 429.1,780.2 432.6,780.3 436.1,779.9 439.6,779.6 443.1,780.1 446.6,780.0 450.1,780.3 453.6,780.7 457.1,780.4 460.6,780.2 464.1,780.3 467.6,780.4 471.1,779.7 474.6,780.7 478.1,780.5 481.6,780.6 485.1,780.6 488.6,780.1 492.1,780.1 495.6,779.7 499.1,780.4 502.6,779.7 506.1,779.7 509.6,779.9 513.1,779.8 516.6,780.0 520.1,779.7 523.6,779.6 527.1,779.8 530.6,779.7 532.7,780.0 534.1,776.4 535.7,772.0 537.6,777.2 538.7,779.8 541.1,779.9 544.6,780.0 548.1,780.0 551.6,779.7 555.1,780.6 558.6,780.8 562.1,780.2 565.6,780.2 569.1,779.7 572.6,779.7 576.1,780.0 579.6,779.9 583.1,780.6 586.6,779.8 590.1,779.6 593.6,780.7 597.1,780.2 600.6,779.8 604.1,780.3 607.6,779.6 611.1,780.2 614.6,780.8 618.1,780.6 621.6,780.4 625.1,779.9 628.6,780.0 629.0,779.8 631.5,755.0 632.1,761.0 634.0,780.5 635.6,780.0 639.1,779.9 642.6,780.6 646.1,780.8 649.6,780.6 653.1,780.6 656.6,780.6 660.1,780.5 663.6,779.9 667.1,780.2 670.6,780.0 674.1,779.6 677.6,779.6 681.1,779.9 684.6,779.9 688.1,780.4 691.6,780.7 695.1,780.1 698.6,780.7 702.1,780.8 705.6,780.7 709.1,780.0 712.6,779.9 716.1,779.9 719.6,779.8 723.1,779.8 726.6,780.3 730.1,780.7 733.6,780.6 737.1,780.2 740.6,780.4 744.1,780.6 747.6,779.7 751.1,780.4 754.6,780.7 758.1,780.5 761.6,780.5 765.1,780.2 768.6,779.8 772.1,780.5 775.6,780.0 779.1,780.6 782.6,780.8 786.1,780.1 789.6,780.1 793.1,780.7 796.6,780.5 800.1,779.8 803.6,779.8 807.1,779.8 810.6,780.7 814.1,780.6 817.6,779.8 821.1,780.6 824.6,780.8 828.1,780.4 829.8,780.0 831.6,775.3 832.8,772.0 835.1,778.3 835.8,780.8 838.6,780.4 842.1,780.2 845.6,780.7 849.1,780.1 852.6,780.6 856.1,780.6 859.6,779.9 863.1,779.9 866.6,780.0 870.1,779.9 873.6,780.3 877.1,779.9 880.6,780.1 884.1,779.8 887.6,780.7 891.1,780.0 894.6,780.1 898.1,780.3 901.6,780.7 905.1,780.1 908.6,780.7 912.1,780.2 915.6,780.2 919.1,780.2 922.6,779.6 926.1,780.1 929.6,779.8 933.1,779.6 936.6,780.6 940.1,779.8 943.6,780.2 947.1,780.5 950.6,780.3 954.1,780.0 957.6,780.2 961.1,780.3 964.6,780.5 968.1,779.7 971.6,780.3 975.1,779.9 978.6,779.9 982.1,780.5 985.6,780.2 989.1,780.3 992.6,780.5 996.1,780.7 999.6,780.1 1003.1,780.3 1006.6,780.2 1010.1,780.2 1013.6,780.4 1017.1,780.1 1020.6,780.2 1024.1,780.2 1027.6,780.7 1031.1,780.4 1034.6,780.7 1038.1,780.7 1041.6,779.9 1045.1,780.3 1048.6,780.7 1052.1,780.6 1055.6,779.8 1059.1,779.7 1062.6,780.1 1066.1,779.7 1069.1,779.9 1069.6,777.7 1072.1,765.0 1073.1,770.1 1075.1,780.7 1076.6,779.8 1080.1,780.5 1083.6,780.4 1087.1,779.8 1090.6,780.7 1094.1,780.8 1097.6,779.9 1101.1,780.7 1104.6,780.1 1108.1,780.2 1111.6,780.8 1115.1,780.6 1118.6,779.8 1122.1,780.1 1125.6,780.2 1129.1,780.0 1132.6,779.8 1136.1,780.0 1139.6,780.5 1143.1,779.6 1146.6,780.3 1150.1,780.1 1153.6,779.6 1157.1,780.0 1160.6,780.3 1164.1,780.2 1167.6,779.7 1171.1,780.8 1174.6,780.5 1178.1,780.8 1181.6,779.7 1185.1,779.9 1188.4,779.6 1188.6,778.9 1191.4,760.0 1192.1,764.7 1194.4,780.1 1195.6,780.7 1199.1,780.6 1202.6,779.9 1206.1,779.8 1209.6,780.7 1213.1,780.3 1216.6,780.4 1220.1,779.7 1223.6,779.7 1227.1,780.4 1230.6,780.1 1234.1,779.7 1237.6,780.7 1241.1,780.4 1244.6,780.6 1248.1,779.7 1251.6,780.6 1255.1,779.7 1258.6,780.6 1262.1,780.1 1265.6,780.0 1269.1,780.3 1272.6,780.7 1276.1,779.9 1277.0,779.8 1279.5,726.3 1279.6,728.5 1282.0,779.7 1283.1,779.8 1286.6,779.7 1290.1,779.8 1293.6,780.0 1297.1,780.0 1300.6,780.5 1304.1,779.9 1307.6,780.2 1311.1,779.8 1314.6,780.0 1318.1,779.6 1321.6,779.9 1322.2,779.6 1325.1,770.3 1325.2,770.0 1328.2,779.8 1328.6,780.2 1332.1,780.7 1335.6,779.7 1339.1,780.6 1342.6,780.1 1343.2,780.2 1346.1,768.4 1346.2,768.0 1349.2,780.2 1349.6,780.4 1353.1,780.8 1356.6,780.0 1360.1,780.6 1363.6,780.4 1367.1,780.4 1370.6,780.1 1374.1,780.0 1377.6,779.7 1381.1,779.8 1384.6,779.7 1388.1,780.5 1391.6,779.9 1395.1,779.8 1398.6,779.7 1402.1,780.6 1405.6,780.6 1409.1,780.4 1412.6,779.9 1416.1,779.9 1419.6,780.0 1423.1,780.2 1426.6,779.8 1430.1,780.1 1433.6,779.9 1437.1,780.8 1440.6,780.8 1444.1,780.3 1447.6,779.9 1451.1,780.8 1454.6,780.0 1458.1,780.0 1461.6,779.6 1465.1,780.1 1468.6,780.2 1469.5,780.2 1469.5,782.5 89.6,782.5" fill="#665c3c"/>
<line x1="153.8" y1="505.2" x2="153.8" y2="782.5" stroke="rgba(255,255,255,0.14)" stroke-width="2"/>
<line x1="268.9" y1="505.2" x2="268.9" y2="782.5" stroke="rgba(255,255,255,0.14)" stroke-width="2"/>
<line x1="384.0" y1="505.2" x2="384.0" y2="782.5" stroke="rgba(255,255,255,0.14)" stroke-width="2"/>
<line x1="499.1" y1="505.2" x2="499.1" y2="782.5" stroke="rgba(255,255,255,0.14)" stroke-width="2"/>
<line x1="614.2" y1="505.2" x2="614.2" y2="782.5" stroke="rgba(255,255,255,0.14)" stroke-width="2"/>
<line x1="729.2" y1="505.2" x2="729.2" y2="782.5" stroke="rgba(255,255,255,0.14)" stroke-width="2"/>
<line x1="844.3" y1="505.2" x2="844.3" y2="782.5" stroke="rgba(255,255,255,0.14)" stroke-width="2"/>
<line x1="959.4" y1="505.2" x2="959.4" y2="782.5" stroke="rgba(255,255,255,0.14)" stroke-width="2"/>
<line x1="1074.5" y1="505.2" x2="1074.5" y2="782.5" stroke="rgba(255,255,255,0.14)" stroke-width="2"/>
<line x1="1189.6" y1="505.2" x2="1189.6" y2="782.5" stroke="rgba(255,255,255,0.14)" stroke-width="2"/>
<line x1="1304.7" y1="505.2" x2="1304.7" y2="782.5" stroke="rgba(255,255,255,0.14)" stroke-width="2"/>
<line x1="1419.8" y1="505.2" x2="1419.8" y2="782.5" stroke="rgba(255,255,255,0.14)" stroke-width="2"/>
<line x1="89.6" y1="505.2" x2="1469.5" y2="505.2" stroke="rgba(255,255,255,0.14)" stroke-width="2"/>
<line x1="89.6" y1="574.5" x2="1469.5" y2="574.5" stroke="rgba(255,255,255,0.14)" stroke-width="2"/>
<line x1="89.6" y1="643.9" x2="1469.5" y2="643.9" stroke="rgba(255,255,255,0.14)" stroke-width="2"/>
<line x1="89.6" y1="713.2" x2="1469.5" y2="713.2" stroke="rgba(255,255,255,0.14)" stroke-width="2"/>
<polyline points="89.6,774.7 93.1,775.3 96.6,775.0 100.1,775.4 103.6,775.4 107.1,774.4 110.6,774.3 114.1,775.8 117.6,774.8 121.1,774.7 124.6,776.1 128.1,775.1 131.6,775.8 135.1,775.2 138.6,775.5 142.1,774.6 145.6,775.4 149.1,775.9 152.6,775.2 156.1,775.6 159.6,775.5 160.7,774.4 163.1,768.6 163.7,767.0 166.6,774.8 166.7,774.4 170.1,775.9 173.6,775.2 177.1,775.6 180.6,775.9 184.1,775.6 187.6,776.0 191.1,775.0 194.6,775.7 198.1,775.1 201.6,776.0 205.1,775.9 208.6,774.5 212.1,774.5 215.6,774.7 219.1,776.0 222.6,775.1 226.1,775.4 229.6,774.8 233.1,775.2 236.6,775.0 240.1,774.9 243.6,775.4 247.1,775.4 250.6,775.9 254.1,775.5 257.6,776.0 261.1,775.8 264.6,776.1 268.1,775.5 269.8,774.6 271.6,767.3 272.8,762.0 275.1,772.1 275.8,775.3 278.6,775.6 282.1,774.7 285.6,775.8 289.1,775.3 291.8,774.8 292.6,716.9 294.3,592.9 296.1,724.2 296.8,774.5 298.0,775.7 299.6,769.2 301.0,764.0 303.1,771.8 304.0,775.7 306.6,775.9 310.1,774.4 313.6,775.4 317.1,774.4 320.6,775.6 324.1,774.9 327.6,775.9 331.1,776.1 334.6,775.2 338.1,776.1 341.6,774.9 345.1,774.4 348.6,775.4 352.1,774.4 355.6,774.7 359.1,775.0 362.6,775.4 363.0,774.6 366.0,767.0 366.1,767.3 369.0,774.9 369.6,776.0 373.1,775.9 376.6,775.0 380.1,775.1 383.6,775.2 387.1,775.5 390.6,775.4 394.1,775.3 397.6,775.4 401.1,776.0 404.6,775.2 408.1,775.1 411.6,775.6 415.1,774.7 418.6,774.8 422.1,776.1 425.6,775.2 429.1,775.3 432.6,774.3 436.1,775.0 439.6,775.3 443.1,774.3 446.6,775.4 450.1,775.4 453.6,774.4 457.1,775.4 460.6,775.1 464.1,775.5 467.6,774.9 471.1,775.6 474.6,775.6 478.1,774.3 481.6,774.4 485.1,775.5 488.6,776.0 492.1,774.8 495.6,775.1 499.1,775.4 502.6,774.9 506.1,775.0 509.6,774.9 513.1,775.0 516.6,775.4 520.1,774.8 523.6,775.0 527.1,775.7 530.6,774.3 532.7,775.3 534.1,764.7 535.7,752.6 537.6,766.9 538.7,775.7 541.1,774.7 544.6,774.6 548.1,775.1 551.6,775.6 555.1,774.5 558.6,774.9 562.1,774.9 565.6,775.8 569.1,775.1 572.6,775.8 576.1,774.6 579.6,774.9 583.1,775.5 586.6,775.9 590.1,775.1 593.6,774.7 597.1,774.5 600.6,775.3 604.1,774.6 607.6,775.8 611.1,775.8 614.6,774.6 618.1,774.8 621.6,775.8 625.1,775.5 628.6,775.8 629.0,774.9 631.5,667.7 632.1,693.5 634.0,775.7 635.6,774.8 639.1,774.9 642.6,775.1 646.1,775.1 648.0,775.0 649.6,767.5 651.0,760.7 653.1,770.9 654.0,776.0 656.6,775.9 660.1,776.1 663.6,775.1 667.1,776.0 670.6,776.0 674.1,774.7 677.6,775.6 681.1,775.8 684.6,775.5 688.1,775.2 691.6,774.8 695.1,774.9 698.6,774.7 702.1,774.4 705.6,775.4 709.1,774.8 712.6,775.8 716.1,774.4 719.6,775.9 723.1,775.5 726.6,776.0 730.1,775.9 733.6,775.9 737.1,775.3 740.6,774.3 744.1,775.6 747.6,774.6 751.1,774.8 754.6,775.5 758.1,775.2 761.6,775.0 765.1,776.0 768.6,775.4 772.1,774.9 775.6,774.8 779.1,775.9 782.6,775.2 786.1,775.7 789.6,774.9 793.1,774.7 796.6,775.3 800.1,775.8 803.6,774.6 807.1,775.7 810.6,776.0 814.1,775.8 817.6,775.8 821.1,774.3 824.6,775.4 828.1,775.9 829.8,774.4 831.6,756.3 832.8,743.7 835.1,767.9 835.8,775.1 838.6,775.2 842.1,775.7 845.6,774.3 849.1,774.4 852.6,774.5 856.1,774.5 859.6,774.4 863.1,776.1 866.6,775.8 870.1,774.5 873.6,775.2 877.1,774.9 880.6,774.9 884.1,774.9 887.6,775.5 891.1,775.4 894.6,774.9 898.1,774.6 901.6,774.9 905.1,774.5 908.6,775.3 912.1,775.6 915.6,775.0 919.1,774.4 922.6,774.6 926.1,775.0 929.6,775.4 933.1,775.7 936.6,775.0 940.1,775.7 943.6,775.4 947.1,775.1 950.6,775.0 954.1,775.2 957.6,775.6 961.1,775.1 964.6,775.5 968.1,775.1 971.6,774.7 975.1,775.3 978.6,775.6 982.1,774.4 985.6,775.1 989.1,775.1 992.6,775.9 996.1,776.0 999.6,775.0 1003.1,775.9 1006.6,775.7 1010.1,774.8 1013.6,775.1 1017.1,774.5 1020.6,775.8 1024.1,775.5 1027.6,775.9 1031.1,775.7 1034.6,775.5 1038.1,775.6 1041.6,775.3 1045.1,774.5 1048.6,775.4 1052.1,774.3 1055.6,774.6 1059.1,775.7 1062.6,774.4 1066.1,774.5 1069.1,774.5 1069.6,765.5 1072.1,717.0 1073.1,736.4 1075.1,775.8 1076.6,774.5 1080.1,775.8 1083.6,775.5 1087.1,775.8 1090.6,776.0 1094.1,775.3 1097.6,775.7 1101.1,774.4 1104.6,775.7 1108.1,775.2 1111.6,775.6 1115.1,774.5 1118.6,775.6 1122.1,776.0 1125.6,774.4 1129.1,774.9 1132.6,775.3 1136.1,775.8 1139.6,774.7 1143.1,774.6 1146.6,774.7 1150.1,775.4 1153.6,775.7 1157.1,775.0 1160.6,775.0 1164.1,775.0 1167.6,774.9 1171.1,775.1 1174.6,774.4 1178.1,775.2 1181.6,776.1 1185.1,775.0 1188.6,775.6 1188.9,774.6 1191.4,615.9 1192.1,660.5 1193.9,775.5 1195.6,775.2 1199.1,775.2 1202.6,775.5 1206.1,775.9 1209.6,774.6 1213.1,774.5 1216.6,775.6 1220.1,775.9 1223.6,775.2 1227.1,775.1 1230.6,775.6 1234.1,774.6 1237.6,774.8 1241.1,774.7 1244.6,775.4 1248.1,774.9 1251.6,774.7 1255.1,775.5 1258.6,776.0 1262.1,774.8 1265.6,775.6 1269.1,775.0 1272.6,775.8 1276.1,775.4 1277.0,774.8 1279.5,607.8 1279.6,614.5 1282.0,775.2 1283.1,775.0 1284.6,774.6 1286.6,761.5 1287.6,754.6 1290.1,771.8 1290.6,774.6 1293.6,776.1 1297.1,775.2 1300.6,775.4 1304.1,775.1 1307.6,775.8 1311.1,775.8 1314.6,775.3 1318.1,775.2 1321.6,775.6 1322.2,775.8 1325.1,735.8 1325.2,734.4 1327.0,758.9 1328.2,770.2 1328.6,768.5 1330.0,762.7 1332.1,771.4 1333.0,775.5 1335.6,776.0 1339.1,775.8 1342.6,774.7 1343.2,774.6 1346.1,718.9 1346.2,717.0 1349.2,775.6 1349.6,775.8 1353.1,775.9 1354.5,774.8 1356.6,744.6 1357.5,731.5 1360.1,769.4 1360.5,775.6 1363.6,774.5 1367.1,774.5 1370.6,775.8 1374.1,774.8 1377.6,774.9 1381.1,775.3 1384.6,775.5 1388.1,774.3 1391.6,774.9 1395.1,775.1 1398.6,775.2 1402.1,774.7 1405.6,775.4 1408.0,776.0 1409.1,772.1 1411.0,766.7 1412.6,771.2 1414.0,774.8 1416.1,775.5 1418.0,774.5 1419.6,765.7 1421.0,757.4 1423.1,769.9 1424.0,776.0 1426.6,775.0 1430.1,775.7 1433.6,775.7 1437.1,774.8 1440.6,775.5 1444.1,775.5 1447.6,775.8 1451.1,774.8 1454.6,775.7 1458.1,776.0 1461.6,775.5 1465.1,775.3 1468.6,774.5 1469.5,775.2" fill="none" stroke="#b0483a" stroke-width="1"/>
<polyline points="89.6,772.7 93.1,773.3 96.6,773.0 100.1,773.4 103.6,773.4 107.1,772.4 110.6,772.3 114.1,773.8 117.6,772.8 121.1,772.7 124.6,774.1 128.1,773.1 131.6,773.8 135.1,773.2 138.6,773.5 142.1,772.6 145.6,773.4 149.1,773.9 152.6,773.2 156.1,773.6 159.6,773.5 160.7,772.4 163.1,766.6 163.7,765.0 166.6,772.8 166.7,772.4 170.1,773.9 173.6,773.2 177.1,773.6 180.6,773.9 184.1,773.6 187.6,774.0 191.1,773.0 194.6,773.7 198.1,773.1 201.6,774.0 205.1,773.9 208.6,772.5 212.1,772.5 215.6,772.7 219.1,774.0 222.6,773.1 226.1,773.4 229.6,772.8 233.1,773.2 236.6,773.0 240.1,772.9 243.6,773.4 247.1,773.4 250.6,773.9 254.1,773.5 257.6,774.0 261.1,773.8 264.6,774.1 268.1,773.5 269.8,772.6 271.6,765.3 272.8,760.0 275.1,770.1 275.8,773.3 278.6,773.6 282.1,772.7 285.6,773.8 289.1,773.3 291.8,772.8 292.6,714.9 294.3,590.9 296.1,722.2 296.8,772.5 298.0,773.7 299.6,767.2 301.0,762.0 303.1,769.8 304.0,773.7 306.6,773.9 310.1,772.4 313.6,773.4 317.1,772.4 320.6,773.6 324.1,772.9 327.6,773.9 331.1,774.1 334.6,773.2 338.1,774.1 341.6,772.9 345.1,772.4 348.6,773.4 352.1,772.4 355.6,772.7 359.1,773.0 362.6,773.4 363.0,772.6 366.0,765.0 366.1,765.3 369.0,772.9 369.6,774.0 373.1,773.9 376.6,773.0 380.1,773.1 383.6,773.2 387.1,773.5 390.6,773.4 394.1,773.3 397.6,773.4 401.1,774.0 404.6,773.2 408.1,773.1 411.6,773.6 415.1,772.7 418.6,772.8 422.1,774.1 425.6,773.2 429.1,773.3 432.6,772.3 436.1,773.0 439.6,773.3 443.1,772.3 446.6,773.4 450.1,773.4 453.6,772.4 457.1,773.4 460.6,773.1 464.1,773.5 467.6,772.9 471.1,773.6 474.6,773.6 478.1,772.3 481.6,772.4 485.1,773.5 488.6,774.0 492.1,772.8 495.6,773.1 499.1,773.4 502.6,772.9 506.1,773.0 509.6,772.9 513.1,773.0 516.6,773.4 520.1,772.8 523.6,773.0 527.1,773.7 530.6,772.3 532.7,773.3 534.1,762.7 535.7,750.6 537.6,764.9 538.7,773.7 541.1,772.7 544.6,772.6 548.1,773.1 551.6,773.6 555.1,772.5 558.6,772.9 562.1,772.9 565.6,773.8 569.1,773.1 572.6,773.8 576.1,772.6 579.6,772.9 583.1,773.5 586.6,773.9 590.1,773.1 593.6,772.7 597.1,772.5 600.6,773.3 604.1,772.6 607.6,773.8 611.1,773.8 614.6,772.6 618.1,772.8 621.6,773.8 625.1,773.5 628.6,773.8 629.0,772.9 631.5,665.7 632.1,691.5 634.0,773.7 635.6,772.8 639.1,772.9 642.6,773.1 646.1,773.1 648.0,773.0 649.6,765.5 651.0,758.7 653.1,768.9 654.0,774.0 656.6,773.9 660.1,774.1 663.6,773.1 667.1,774.0 670.6,774.0 674.1,772.7 677.6,773.6 681.1,773.8 684.6,773.5 688.1,773.2 691.6,772.8 695.1,772.9 698.6,772.7 702.1,772.4 705.6,773.4 709.1,772.8 712.6,773.8 716.1,772.4 719.6,773.9 723.1,773.5 726.6,774.0 730.1,773.9 733.6,773.9 737.1,773.3 740.6,772.3 744.1,773.6 747.6,772.6 751.1,772.8 754.6,773.5 758.1,773.2 761.6,773.0 765.1,774.0 768.6,773.4 772.1,772.9 775.6,772.8 779.1,773.9 782.6,773.2 786.1,773.7 789.6,772.9 793.1,772.7 796.6,773.3 800.1,773.8 803.6,772.6 807.1,773.7 810.6,774.0 814.1,773.8 817.6,773.8 821.1,772.3 824.6,773.4 828.1,773.9 829.8,772.4 831.6,754.3 832.8,741.7 835.1,765.9 835.8,773.1 838.6,773.2 842.1,773.7 845.6,772.3 849.1,772.4 852.6,772.5 856.1,772.5 859.6,772.4 863.1,774.1 866.6,773.8 870.1,772.5 873.6,773.2 877.1,772.9 880.6,772.9 884.1,772.9 887.6,773.5 891.1,773.4 894.6,772.9 898.1,772.6 901.6,772.9 905.1,772.5 908.6,773.3 912.1,773.6 915.6,773.0 919.1,772.4 922.6,772.6 926.1,773.0 929.6,773.4 933.1,773.7 936.6,773.0 940.1,773.7 943.6,773.4 947.1,773.1 950.6,773.0 954.1,773.2 957.6,773.6 961.1,773.1 964.6,773.5 968.1,773.1 971.6,772.7 975.1,773.3 978.6,773.6 982.1,772.4 985.6,773.1 989.1,773.1 992.6,773.9 996.1,774.0 999.6,773.0 1003.1,773.9 1006.6,773.7 1010.1,772.8 1013.6,773.1 1017.1,772.5 1020.6,773.8 1024.1,773.5 1027.6,773.9 1031.1,773.7 1034.6,773.5 1038.1,773.6 1041.6,773.3 1045.1,772.5 1048.6,773.4 1052.1,772.3 1055.6,772.6 1059.1,773.7 1062.6,772.4 1066.1,772.5 1069.1,772.5 1069.6,763.5 1072.1,715.0 1073.1,734.4 1075.1,773.8 1076.6,772.5 1080.1,773.8 1083.6,773.5 1087.1,773.8 1090.6,774.0 1094.1,773.3 1097.6,773.7 1101.1,772.4 1104.6,773.7 1108.1,773.2 1111.6,773.6 1115.1,772.5 1118.6,773.6 1122.1,774.0 1125.6,772.4 1129.1,772.9 1132.6,773.3 1136.1,773.8 1139.6,772.7 1143.1,772.6 1146.6,772.7 1150.1,773.4 1153.6,773.7 1157.1,773.0 1160.6,773.0 1164.1,773.0 1167.6,772.9 1171.1,773.1 1174.6,772.4 1178.1,773.2 1181.6,774.1 1185.1,773.0 1188.6,773.6 1188.9,772.6 1191.4,613.9 1192.1,658.5 1193.9,773.5 1195.6,773.2 1199.1,773.2 1202.6,773.5 1206.1,773.9 1209.6,772.6 1213.1,772.5 1216.6,773.6 1220.1,773.9 1223.6,773.2 1227.1,773.1 1230.6,773.6 1234.1,772.6 1237.6,772.8 1241.1,772.7 1244.6,773.4 1248.1,772.9 1251.6,772.7 1255.1,773.5 1258.6,774.0 1262.1,772.8 1265.6,773.6 1269.1,773.0 1272.6,773.8 1276.1,773.4 1277.0,772.8 1279.5,605.8 1279.6,612.5 1282.0,773.2 1283.1,773.0 1284.6,772.6 1286.6,759.5 1287.6,752.6 1290.1,769.8 1290.6,772.6 1293.6,774.1 1297.1,773.2 1300.6,773.4 1304.1,773.1 1307.6,773.8 1311.1,773.8 1314.6,773.3 1318.1,773.2 1321.6,773.6 1322.2,773.8 1325.1,733.8 1325.2,732.4 1327.0,756.9 1328.2,768.2 1328.6,766.5 1330.0,760.7 1332.1,769.4 1333.0,773.5 1335.6,774.0 1339.1,773.8 1342.6,772.7 1343.2,772.6 1346.1,716.9 1346.2,715.0 1349.2,773.6 1349.6,773.8 1353.1,773.9 1354.5,772.8 1356.6,742.6 1357.5,729.5 1360.1,767.4 1360.5,773.6 1363.6,772.5 1367.1,772.5 1370.6,773.8 1374.1,772.8 1377.6,772.9 1381.1,773.3 1384.6,773.5 1388.1,772.3 1391.6,772.9 1395.1,773.1 1398.6,773.2 1402.1,772.7 1405.6,773.4 1408.0,774.0 1409.1,770.1 1411.0,764.7 1412.6,769.2 1414.0,772.8 1416.1,773.5 1418.0,772.5 1419.6,763.7 1421.0,755.4 1423.1,767.9 1424.0,774.0 1426.6,773.0 1430.1,773.7 1433.6,773.7 1437.1,772.8 1440.6,773.5 1444.1,773.5 1447.6,773.8 1451.1,772.8 1454.6,773.7 1458.1,774.0 1461.6,773.5 1465.1,773.3 1468.6,772.5 1469.5,773.2" fill="none" stroke="#7d3a8a" stroke-width="1.6"/>
<polyline points="89.6,780.0 93.1,779.8 96.6,780.4 100.1,779.7 103.6,780.2 107.1,780.0 110.6,779.7 114.1,780.2 117.6,779.6 121.1,780.1 124.6,779.7 128.1,779.7 131.6,780.1 135.1,780.6 138.6,779.7 142.1,779.9 145.6,780.4 149.1,780.7 152.6,780.3 156.1,780.1 159.6,780.8 160.7,779.7 163.1,776.8 163.7,776.0 166.6,779.8 166.7,779.7 170.1,780.0 173.6,780.6 177.1,779.8 180.6,780.3 184.1,780.4 187.6,780.0 191.1,780.3 194.6,779.7 198.1,779.7 201.6,779.8 205.1,780.4 208.6,780.1 212.1,780.0 215.6,780.3 219.1,780.1 222.6,780.0 226.1,780.6 229.6,780.4 233.1,779.9 236.6,780.3 240.1,780.2 243.6,780.7 247.1,780.5 250.6,779.9 254.1,780.8 257.6,779.7 261.1,780.1 264.6,780.5 268.1,779.8 271.6,780.2 275.1,779.6 278.6,780.4 282.1,780.5 285.6,780.3 289.1,780.7 291.8,780.0 292.6,769.4 294.3,746.6 296.1,770.8 296.8,780.1 299.6,780.6 303.1,780.7 306.6,780.2 310.1,780.4 313.6,779.7 317.1,780.4 320.6,780.4 324.1,780.8 327.6,780.6 331.1,779.9 334.6,780.1 338.1,780.4 341.6,779.6 345.1,780.2 348.6,779.8 352.1,779.7 355.6,779.7 359.1,780.5 362.6,779.8 366.1,779.9 369.6,780.1 373.1,780.6 376.6,779.7 380.1,780.1 383.6,780.3 387.1,780.7 390.6,780.6 394.1,780.6 397.6,779.9 401.1,780.1 404.6,780.0 408.1,780.7 411.6,780.7 415.1,779.8 418.6,779.8 422.1,779.9 425.6,779.9 429.1,780.2 432.6,780.3 436.1,779.9 439.6,779.6 443.1,780.1 446.6,780.0 450.1,780.3 453.6,780.7 457.1,780.4 460.6,780.2 464.1,780.3 467.6,780.4 471.1,779.7 474.6,780.7 478.1,780.5 481.6,780.6 485.1,780.6 488.6,780.1 492.1,780.1 495.6,779.7 499.1,780.4 502.6,779.7 506.1,779.7 509.6,779.9 513.1,779.8 516.6,780.0 520.1,779.7 523.6,779.6 527.1,779.8 530.6,779.7 532.7,780.0 534.1,776.4 535.7,772.0 537.6,777.2 538.7,779.8 541.1,779.9 544.6,780.0 548.1,780.0 551.6,779.7 555.1,780.6 558.6,780.8 562.1,780.2 565.6,780.2 569.1,779.7 572.6,779.7 576.1,780.0 579.6,779.9 583.1,780.6 586.6,779.8 590.1,779.6 593.6,780.7 597.1,780.2 600.6,779.8 604.1,780.3 607.6,779.6 611.1,780.2 614.6,780.8 618.1,780.6 621.6,780.4 625.1,779.9 628.6,780.0 629.0,779.8 631.5,755.0 632.1,761.0 634.0,780.5 635.6,780.0 639.1,779.9 642.6,780.6 646.1,780.8 649.6,780.6 653.1,780.6 656.6,780.6 660.1,780.5 663.6,779.9 667.1,780.2 670.6,780.0 674.1,779.6 677.6,779.6 681.1,779.9 684.6,779.9 688.1,780.4 691.6,780.7 695.1,780.1 698.6,780.7 702.1,780.8 705.6,780.7 709.1,780.0 712.6,779.9 716.1,779.9 719.6,779.8 723.1,779.8 726.6,780.3 730.1,780.7 733.6,780.6 737.1,780.2 740.6,780.4 744.1,780.6 747.6,779.7 751.1,780.4 754.6,780.7 758.1,780.5 761.6,780.5 765.1,780.2 768.6,779.8 772.1,780.5 775.6,780.0 779.1,780.6 782.6,780.8 786.1,780.1 789.6,780.1 793.1,780.7 796.6,780.5 800.1,779.8 803.6,779.8 807.1,779.8 810.6,780.7 814.1,780.6 817.6,779.8 821.1,780.6 824.6,780.8 828.1,780.4 829.8,780.0 831.6,775.3 832.8,772.0 835.1,778.3 835.8,780.8 838.6,780.4 842.1,780.2 845.6,780.7 849.1,780.1 852.6,780.6 856.1,780.6 859.6,779.9 863.1,779.9 866.6,780.0 870.1,779.9 873.6,780.3 877.1,779.9 880.6,780.1 884.1,779.8 887.6,780.7 891.1,780.0 894.6,780.1 898.1,780.3 901.6,780.7 905.1,780.1 908.6,780.7 912.1,780.2 915.6,780.2 919.1,780.2 922.6,779.6 926.1,780.1 929.6,779.8 933.1,779.6 936.6,780.6 940.1,779.8 943.6,780.2 947.1,780.5 950.6,780.3 954.1,780.0 957.6,780.2 961.1,780.3 964.6,780.5 968.1,779.7 971.6,780.3 975.1,779.9 978.6,779.9 982.1,780.5 985.6,780.2 989.1,780.3 992.6,780.5 996.1,780.7 999.6,780.1 1003.1,780.3 1006.6,780.2 1010.1,780.2 1013.6,780.4 1017.1,780.1 1020.6,780.2 1024.1,780.2 1027.6,780.7 1031.1,780.4 1034.6,780.7 1038.1,780.7 1041.6,779.9 1045.1,780.3 1048.6,780.7 1052.1,780.6 1055.6,779.8 1059.1,779.7 1062.6,780.1 1066.1,779.7 1069.1,779.9 1069.6,777.7 1072.1,765.0 1073.1,770.1 1075.1,780.7 1076.6,779.8 1080.1,780.5 1083.6,780.4 1087.1,779.8 1090.6,780.7 1094.1,780.8 1097.6,779.9 1101.1,780.7 1104.6,780.1 1108.1,780.2 1111.6,780.8 1115.1,780.6 1118.6,779.8 1122.1,780.1 1125.6,780.2 1129.1,780.0 1132.6,779.8 1136.1,780.0 1139.6,780.5 1143.1,779.6 1146.6,780.3 1150.1,780.1 1153.6,779.6 1157.1,780.0 1160.6,780.3 1164.1,780.2 1167.6,779.7 1171.1,780.8 1174.6,780.5 1178.1,780.8 1181.6,779.7 1185.1,779.9 1188.4,779.6 1188.6,778.9 1191.4,760.0 1192.1,764.7 1194.4,780.1 1195.6,780.7 1199.1,780.6 1202.6,779.9 1206.1,779.8 1209.6,780.7 1213.1,780.3 1216.6,780.4 1220.1,779.7 1223.6,779.7 1227.1,780.4 1230.6,780.1 1234.1,779.7 1237.6,780.7 1241.1,780.4 1244.6,780.6 1248.1,779.7 1251.6,780.6 1255.1,779.7 1258.6,780.6 1262.1,780.1 1265.6,780.0 1269.1,780.3 1272.6,780.7 1276.1,779.9 1277.0,779.8 1279.5,726.3 1279.6,728.5 1282.0,779.7 1283.1,779.8 1286.6,779.7 1290.1,779.8 1293.6,780.0 1297.1,780.0 1300.6,780.5 1304.1,779.9 1307.6,780.2 1311.1,779.8 1314.6,780.0 1318.1,779.6 1321.6,779.9 1322.2,779.6 1325.1,770.3 1325.2,770.0 1328.2,779.8 1328.6,780.2 1332.1,780.7 1335.6,779.7 1339.1,780.6 1342.6,780.1 1343.2,780.2 1346.1,768.4 1346.2,768.0 1349.2,780.2 1349.6,780.4 1353.1,780.8 1356.6,780.0 1360.1,780.6 1363.6,780.4 1367.1,780.4 1370.6,780.1 1374.1,780.0 1377.6,779.7 1381.1,779.8 1384.6,779.7 1388.1,780.5 1391.6,779.9 1395.1,779.8 1398.6,779.7 1402.1,780.6 1405.6,780.6 1409.1,780.4 1412.6,779.9 1416.1,779.9 1419.6,780.0 1423.1,780.2 1426.6,779.8 1430.1,780.1 1433.6,779.9 1437.1,780.8 1440.6,780.8 1444.1,780.3 1447.6,779.9 1451.1,780.8 1454.6,780.0 1458.1,780.0 1461.6,779.6 1465.1,780.1 1468.6,780.2 1469.5,780.2" fill="none" stroke="#dcb64a" stroke-width="1.6"/>
<line x1="89.6" y1="505.7" x2="1469.5" y2="505.7" stroke="#7eb26d" stroke-width="2" stroke-dasharray="90 2 55 1.5 130 2 40 1.5 75 2"/>
<text transform="translate(28.70,513.10) scale(0.8624,1)" font-size="22.97" font-weight="normal" fill="#ccccdc" stroke="#ccccdc" stroke-width="0.45">100%</text>
<text transform="translate(40.80,582.42) scale(0.8469,1)" font-size="22.97" font-weight="normal" fill="#ccccdc" stroke="#ccccdc" stroke-width="0.45">75%</text>
<text transform="translate(41.70,651.75) scale(0.8295,1)" font-size="22.97" font-weight="normal" fill="#ccccdc" stroke="#ccccdc" stroke-width="0.45">50%</text>
<text transform="translate(41.00,721.07) scale(0.8447,1)" font-size="22.97" font-weight="normal" fill="#ccccdc" stroke="#ccccdc" stroke-width="0.45">25%</text>
<text transform="translate(51.70,790.40) scale(0.7985,1)" font-size="22.97" font-weight="normal" fill="#ccccdc" stroke="#ccccdc" stroke-width="0.45">0%</text>
<text transform="translate(126.85,815.10) scale(0.8853,1)" font-size="23.40" font-weight="normal" fill="#ccccdc" stroke="#ccccdc" stroke-width="0.45">14:00</text>
<text transform="translate(241.94,815.10) scale(0.8853,1)" font-size="23.40" font-weight="normal" fill="#ccccdc" stroke="#ccccdc" stroke-width="0.45">16:00</text>
<text transform="translate(357.03,815.10) scale(0.8853,1)" font-size="23.40" font-weight="normal" fill="#ccccdc" stroke="#ccccdc" stroke-width="0.45">18:00</text>
<text transform="translate(472.12,815.10) scale(0.8853,1)" font-size="23.40" font-weight="normal" fill="#ccccdc" stroke="#ccccdc" stroke-width="0.45">20:00</text>
<text transform="translate(587.21,815.10) scale(0.8853,1)" font-size="23.40" font-weight="normal" fill="#ccccdc" stroke="#ccccdc" stroke-width="0.45">22:00</text>
<text transform="translate(702.30,815.10) scale(0.8853,1)" font-size="23.40" font-weight="normal" fill="#ccccdc" stroke="#ccccdc" stroke-width="0.45">00:00</text>
<text transform="translate(817.39,815.10) scale(0.8853,1)" font-size="23.40" font-weight="normal" fill="#ccccdc" stroke="#ccccdc" stroke-width="0.45">02:00</text>
<text transform="translate(932.48,815.10) scale(0.8853,1)" font-size="23.40" font-weight="normal" fill="#ccccdc" stroke="#ccccdc" stroke-width="0.45">04:00</text>
<text transform="translate(1047.57,815.10) scale(0.8853,1)" font-size="23.40" font-weight="normal" fill="#ccccdc" stroke="#ccccdc" stroke-width="0.45">06:00</text>
<text transform="translate(1162.66,815.10) scale(0.8853,1)" font-size="23.40" font-weight="normal" fill="#ccccdc" stroke="#ccccdc" stroke-width="0.45">08:00</text>
<text transform="translate(1277.75,815.10) scale(0.8853,1)" font-size="23.40" font-weight="normal" fill="#ccccdc" stroke="#ccccdc" stroke-width="0.45">10:00</text>
<text transform="translate(1392.84,815.10) scale(0.8853,1)" font-size="23.40" font-weight="normal" fill="#ccccdc" stroke="#ccccdc" stroke-width="0.45">12:00</text>
<rect x="44.0" y="849.0" width="26" height="8" rx="2.5" fill="#eac050"/>
<text transform="translate(84.20,858.80) scale(0.9403,1)" font-size="23.11" font-weight="normal" fill="#ccccdc" stroke="#ccccdc" stroke-width="0.45">Busy System</text>
<rect x="229.9" y="849.0" width="26" height="8" rx="2.5" fill="#2a5597"/>
<text transform="translate(270.40,858.80) scale(0.9245,1)" font-size="23.11" font-weight="normal" fill="#ccccdc" stroke="#ccccdc" stroke-width="0.45">Busy User</text>
<rect x="388.1" y="849.0" width="26" height="8" rx="2.5" fill="#8a2315"/>
<text transform="translate(428.30,858.80) scale(0.9610,1)" font-size="23.11" font-weight="normal" fill="#ccccdc" stroke="#ccccdc" stroke-width="0.45">Busy Iowait</text>
<rect x="561.1" y="849.0" width="26" height="8" rx="2.5" fill="#e8884a"/>
<text transform="translate(600.60,858.80) scale(0.9016,1)" font-size="23.11" font-weight="normal" fill="#ccccdc" stroke="#ccccdc" stroke-width="0.45">Busy IRQs</text>
<rect x="719.0" y="849.0" width="26" height="8" rx="2.5" fill="#6e2872"/>
<text transform="translate(759.60,858.80) scale(0.9277,1)" font-size="23.11" font-weight="normal" fill="#ccccdc" stroke="#ccccdc" stroke-width="0.45">Busy Other</text>
<rect x="886.0" y="849.0" width="26" height="8" rx="2.5" fill="#8ab86e"/>
<text transform="translate(926.00,858.80) scale(0.9380,1)" font-size="23.11" font-weight="normal" fill="#ccccdc" stroke="#ccccdc" stroke-width="0.45">Idle</text>
<rect x="1637" y="559" width="1351.1999999999998" height="223.20000000000005" fill="#475a42"/>
<polygon points="1637.0,580.0 1706.0,580.0 1708.0,574.7 1812.0,572.7 1818.0,568.7 1822.0,572.5 1833.0,572.0 1835.0,566.7 1838.4,589.0 1843.6,576.8 1846.5,584.0 1889.0,582.0 1893.0,580.0 1900.0,581.0 1905.0,580.5 1909.0,584.0 2073.0,580.8 2075.0,577.6 2164.0,576.0 2167.0,608.3 2170.0,593.0 2176.0,593.0 2178.0,590.0 2186.0,585.0 2280.0,583.0 2318.0,582.5 2320.0,580.6 2595.0,576.0 2598.0,566.6 2601.0,577.0 2712.0,571.0 2714.0,565.4 2716.6,588.8 2799.0,585.6 2802.0,570.6 2806.0,581.0 2846.0,580.0 2848.0,567.8 2852.0,580.8 2912.0,583.0 2916.7,586.0 2937.0,584.0 2945.0,574.0 2988.2,573.5 2988.2,782.2 1637.0,782.2" fill="#172133"/>
<polygon points="1637.0,651.6 1706.0,651.2 1708.0,648.8 1812.0,648.8 1818.0,645.5 1822.0,649.5 1833.0,650.0 1835.0,635.4 1838.0,653.6 1843.6,642.3 1846.5,650.4 1889.0,649.0 1893.0,647.5 1900.0,648.0 1905.0,647.5 1909.0,652.0 2164.0,652.5 2167.0,669.0 2170.0,655.0 2186.0,652.5 2280.0,652.7 2318.0,652.5 2320.0,651.5 2595.0,650.7 2598.0,646.2 2601.0,651.5 2712.0,651.0 2714.0,646.2 2716.0,651.0 2799.0,650.0 2802.0,637.3 2806.0,643.4 2912.0,644.6 2916.0,650.3 2988.2,648.6 2988.2,782.2 1637.0,782.2" fill="#6b5b35"/>
<line x1="1699.7" y1="504.8" x2="1699.7" y2="782.2" stroke="rgba(255,255,255,0.14)" stroke-width="2"/>
<line x1="1812.5" y1="504.8" x2="1812.5" y2="782.2" stroke="rgba(255,255,255,0.14)" stroke-width="2"/>
<line x1="1925.2" y1="504.8" x2="1925.2" y2="782.2" stroke="rgba(255,255,255,0.14)" stroke-width="2"/>
<line x1="2038.1" y1="504.8" x2="2038.1" y2="782.2" stroke="rgba(255,255,255,0.14)" stroke-width="2"/>
<line x1="2150.8" y1="504.8" x2="2150.8" y2="782.2" stroke="rgba(255,255,255,0.14)" stroke-width="2"/>
<line x1="2263.7" y1="504.8" x2="2263.7" y2="782.2" stroke="rgba(255,255,255,0.14)" stroke-width="2"/>
<line x1="2376.4" y1="504.8" x2="2376.4" y2="782.2" stroke="rgba(255,255,255,0.14)" stroke-width="2"/>
<line x1="2489.2" y1="504.8" x2="2489.2" y2="782.2" stroke="rgba(255,255,255,0.14)" stroke-width="2"/>
<line x1="2602.1" y1="504.8" x2="2602.1" y2="782.2" stroke="rgba(255,255,255,0.14)" stroke-width="2"/>
<line x1="2714.8" y1="504.8" x2="2714.8" y2="782.2" stroke="rgba(255,255,255,0.14)" stroke-width="2"/>
<line x1="2827.7" y1="504.8" x2="2827.7" y2="782.2" stroke="rgba(255,255,255,0.14)" stroke-width="2"/>
<line x1="2938.6" y1="504.8" x2="2938.6" y2="782.2" stroke="rgba(255,255,255,0.14)" stroke-width="2"/>
<line x1="1637" y1="504.8" x2="2988.2" y2="504.8" stroke="rgba(255,255,255,0.14)" stroke-width="2"/>
<line x1="1637" y1="560.3" x2="2988.2" y2="560.3" stroke="rgba(255,255,255,0.14)" stroke-width="2"/>
<line x1="1637" y1="615.8" x2="2988.2" y2="615.8" stroke="rgba(255,255,255,0.14)" stroke-width="2"/>
<line x1="1637" y1="671.2" x2="2988.2" y2="671.2" stroke="rgba(255,255,255,0.14)" stroke-width="2"/>
<line x1="1637" y1="726.7" x2="2988.2" y2="726.7" stroke="rgba(255,255,255,0.14)" stroke-width="2"/>
<line x1="1637" y1="560.8" x2="2988.2" y2="560.8" stroke="#5f745a" stroke-width="2"/>
<polyline points="1637.0,580.0 1706.0,580.0 1708.0,574.7 1812.0,572.7 1818.0,568.7 1822.0,572.5 1833.0,572.0 1835.0,566.7 1838.4,589.0 1843.6,576.8 1846.5,584.0 1889.0,582.0 1893.0,580.0 1900.0,581.0 1905.0,580.5 1909.0,584.0 2073.0,580.8 2075.0,577.6 2164.0,576.0 2167.0,608.3 2170.0,593.0 2176.0,593.0 2178.0,590.0 2186.0,585.0 2280.0,583.0 2318.0,582.5 2320.0,580.6 2595.0,576.0 2598.0,566.6 2601.0,577.0 2712.0,571.0 2714.0,565.4 2716.6,588.8 2799.0,585.6 2802.0,570.6 2806.0,581.0 2846.0,580.0 2848.0,567.8 2852.0,580.8 2912.0,583.0 2916.7,586.0 2937.0,584.0 2945.0,574.0 2988.2,573.5" fill="none" stroke="#1d4470" stroke-width="1.3"/>
<polyline points="1637.0,651.6 1706.0,651.2 1708.0,648.8 1812.0,648.8 1818.0,645.5 1822.0,649.5 1833.0,650.0 1835.0,635.4 1838.0,653.6 1843.6,642.3 1846.5,650.4 1889.0,649.0 1893.0,647.5 1900.0,648.0 1905.0,647.5 1909.0,652.0 2164.0,652.5 2167.0,669.0 2170.0,655.0 2186.0,652.5 2280.0,652.7 2318.0,652.5 2320.0,651.5 2595.0,650.7 2598.0,646.2 2601.0,651.5 2712.0,651.0 2714.0,646.2 2716.0,651.0 2799.0,650.0 2802.0,637.3 2806.0,643.4 2912.0,644.6 2916.0,650.3 2988.2,648.6" fill="none" stroke="#dbb040" stroke-width="1.6"/>
<line x1="1637" y1="557.7" x2="2988.2" y2="557.7" stroke="#b9361f" stroke-width="2.6"/>
<text transform="translate(1546.70,512.70) scale(0.8977,1)" font-size="22.97" font-weight="normal" fill="#ccccdc" stroke="#ccccdc" stroke-width="0.45">2.33 GiB</text>
<text transform="translate(1547.50,568.18) scale(0.8888,1)" font-size="22.97" font-weight="normal" fill="#ccccdc" stroke="#ccccdc" stroke-width="0.45">1.86 GiB</text>
<text transform="translate(1547.50,623.66) scale(0.8888,1)" font-size="22.97" font-weight="normal" fill="#ccccdc" stroke="#ccccdc" stroke-width="0.45">1.40 GiB</text>
<text transform="translate(1548.60,679.14) scale(0.9290,1)" font-size="22.97" font-weight="normal" fill="#ccccdc" stroke="#ccccdc" stroke-width="0.45">954 MiB</text>
<text transform="translate(1548.00,734.62) scale(0.9361,1)" font-size="22.97" font-weight="normal" fill="#ccccdc" stroke="#ccccdc" stroke-width="0.45">477 MiB</text>
<text transform="translate(1597.50,790.10) scale(0.8535,1)" font-size="22.97" font-weight="normal" fill="#ccccdc" stroke="#ccccdc" stroke-width="0.45">0 B</text>
<text transform="translate(1672.90,815.10) scale(0.8853,1)" font-size="23.40" font-weight="normal" fill="#ccccdc" stroke="#ccccdc" stroke-width="0.45">14:00</text>
<text transform="translate(1785.70,815.10) scale(0.8853,1)" font-size="23.40" font-weight="normal" fill="#ccccdc" stroke="#ccccdc" stroke-width="0.45">16:00</text>
<text transform="translate(1898.50,815.10) scale(0.8853,1)" font-size="23.40" font-weight="normal" fill="#ccccdc" stroke="#ccccdc" stroke-width="0.45">18:00</text>
<text transform="translate(2011.30,815.10) scale(0.8853,1)" font-size="23.40" font-weight="normal" fill="#ccccdc" stroke="#ccccdc" stroke-width="0.45">20:00</text>
<text transform="translate(2124.10,815.10) scale(0.8853,1)" font-size="23.40" font-weight="normal" fill="#ccccdc" stroke="#ccccdc" stroke-width="0.45">22:00</text>
<text transform="translate(2236.90,815.10) scale(0.8853,1)" font-size="23.40" font-weight="normal" fill="#ccccdc" stroke="#ccccdc" stroke-width="0.45">00:00</text>
<text transform="translate(2349.70,815.10) scale(0.8853,1)" font-size="23.40" font-weight="normal" fill="#ccccdc" stroke="#ccccdc" stroke-width="0.45">02:00</text>
<text transform="translate(2462.50,815.10) scale(0.8853,1)" font-size="23.40" font-weight="normal" fill="#ccccdc" stroke="#ccccdc" stroke-width="0.45">04:00</text>
<text transform="translate(2575.30,815.10) scale(0.8853,1)" font-size="23.40" font-weight="normal" fill="#ccccdc" stroke="#ccccdc" stroke-width="0.45">06:00</text>
<text transform="translate(2688.10,815.10) scale(0.8853,1)" font-size="23.40" font-weight="normal" fill="#ccccdc" stroke="#ccccdc" stroke-width="0.45">08:00</text>
<text transform="translate(2800.90,815.10) scale(0.8853,1)" font-size="23.40" font-weight="normal" fill="#ccccdc" stroke="#ccccdc" stroke-width="0.45">10:00</text>
<text transform="translate(2911.85,815.10) scale(0.8853,1)" font-size="23.40" font-weight="normal" fill="#ccccdc" stroke="#ccccdc" stroke-width="0.45">12:00</text>
<rect x="1561.8" y="849.0" width="26" height="8" rx="2.5" fill="#e0f9d7"/>
<text transform="translate(1602.70,858.80) scale(0.9558,1)" font-size="23.11" font-weight="normal" fill="#ccccdc" stroke="#ccccdc" stroke-width="0.45">RAM Total</text>
<rect x="1723.3" y="849.0" width="26" height="8" rx="2.5" fill="#eab839"/>
<text transform="translate(1763.90,858.80) scale(0.9137,1)" font-size="23.11" font-weight="normal" fill="#ccccdc" stroke="#ccccdc" stroke-width="0.45">RAM Used</text>
<rect x="1884.9" y="849.0" width="26" height="8" rx="2.5" fill="#052b51"/>
<text transform="translate(1925.40,858.80) scale(0.9422,1)" font-size="23.11" font-weight="normal" fill="#ccccdc" stroke="#ccccdc" stroke-width="0.45">RAM Cache + Buffer</text>
<rect x="2143.7" y="849.0" width="26" height="8" rx="2.5" fill="#7eb26d"/>
<text transform="translate(2184.30,858.80) scale(0.9110,1)" font-size="23.11" font-weight="normal" fill="#ccccdc" stroke="#ccccdc" stroke-width="0.45">RAM Free</text>
<rect x="2298.6" y="849.0" width="26" height="8" rx="2.5" fill="#bf3322"/>
<text transform="translate(2338.50,858.80) scale(0.9134,1)" font-size="23.11" font-weight="normal" fill="#ccccdc" stroke="#ccccdc" stroke-width="0.45">SWAP Used</text>
<line x1="3016.5" y1="835.4" x2="3016.5" y2="867" stroke="#33342f" stroke-width="1"/>
<line x1="177.8" y1="988.8" x2="177.8" y2="1266.1" stroke="rgba(255,255,255,0.14)" stroke-width="2"/>
<line x1="290.7" y1="988.8" x2="290.7" y2="1266.1" stroke="rgba(255,255,255,0.14)" stroke-width="2"/>
<line x1="403.5" y1="988.8" x2="403.5" y2="1266.1" stroke="rgba(255,255,255,0.14)" stroke-width="2"/>
<line x1="516.4" y1="988.8" x2="516.4" y2="1266.1" stroke="rgba(255,255,255,0.14)" stroke-width="2"/>
<line x1="629.3" y1="988.8" x2="629.3" y2="1266.1" stroke="rgba(255,255,255,0.14)" stroke-width="2"/>
<line x1="742.2" y1="988.8" x2="742.2" y2="1266.1" stroke="rgba(255,255,255,0.14)" stroke-width="2"/>
<line x1="855.0" y1="988.8" x2="855.0" y2="1266.1" stroke="rgba(255,255,255,0.14)" stroke-width="2"/>
<line x1="967.9" y1="988.8" x2="967.9" y2="1266.1" stroke="rgba(255,255,255,0.14)" stroke-width="2"/>
<line x1="1080.8" y1="988.8" x2="1080.8" y2="1266.1" stroke="rgba(255,255,255,0.14)" stroke-width="2"/>
<line x1="1193.6" y1="988.8" x2="1193.6" y2="1266.1" stroke="rgba(255,255,255,0.14)" stroke-width="2"/>
<line x1="1306.5" y1="988.8" x2="1306.5" y2="1266.1" stroke="rgba(255,255,255,0.14)" stroke-width="2"/>
<line x1="1419.4" y1="988.8" x2="1419.4" y2="1266.1" stroke="rgba(255,255,255,0.14)" stroke-width="2"/>
<line x1="113.1" y1="988.8" x2="1469.5" y2="988.8" stroke="rgba(255,255,255,0.14)" stroke-width="2"/>
<line x1="113.1" y1="1057.9" x2="1469.5" y2="1057.9" stroke="rgba(255,255,255,0.14)" stroke-width="2"/>
<line x1="113.1" y1="1127.4" x2="1469.5" y2="1127.4" stroke="rgba(255,255,255,0.14)" stroke-width="2"/>
<line x1="113.1" y1="1196.6" x2="1469.5" y2="1196.6" stroke="rgba(255,255,255,0.14)" stroke-width="2"/>
<line x1="113.1" y1="1266.1" x2="1469.5" y2="1266.1" stroke="rgba(255,255,255,0.14)" stroke-width="2"/>
<line x1="113.1" y1="1195.6" x2="1469.5" y2="1195.6" stroke="#eab839" stroke-width="1.5" stroke-opacity="0.7"/>
<line x1="113.1" y1="1196.6" x2="1469.5" y2="1196.6" stroke="#4a86c5" stroke-width="2.5"/>
<polygon points="311.5,1196.6 314.0,1161.8 316.5,1196.6" fill="#7eb26d" fill-opacity="0.5" stroke="#7eb26d" stroke-width="1.5"/>
<polygon points="311.5,1196.6 314.0,1182.0 316.5,1196.6" fill="#eab839" fill-opacity="0.5" stroke="#eab839" stroke-width="1.5"/>
<polygon points="319.6,1196.6 322.1,1127.4 324.6,1196.6" fill="#7eb26d" fill-opacity="0.5" stroke="#7eb26d" stroke-width="1.5"/>
<polygon points="319.1,1196.6 322.1,1165.9 325.1,1196.6" fill="#6ed0e0" fill-opacity="0.5" stroke="#6ed0e0" stroke-width="1.5"/>
<polygon points="319.6,1196.6 322.1,1228.5 324.6,1196.6" fill="#ef843c" fill-opacity="0.5" stroke="#ef843c" stroke-width="1.5"/>
<polygon points="319.1,1196.6 322.1,1220.0 325.1,1196.6" fill="#4a86c5" fill-opacity="0.5" stroke="#4a86c5" stroke-width="1.5"/>
<polygon points="549.3,1196.6 551.8,1186.9 554.3,1196.6" fill="#eab839" fill-opacity="0.5" stroke="#eab839" stroke-width="1.5"/>
<polygon points="662.5,1196.6 665.0,1166.7 667.5,1196.6" fill="#7eb26d" fill-opacity="0.5" stroke="#7eb26d" stroke-width="1.5"/>
<polygon points="662.5,1196.6 665.0,1175.0 667.5,1196.6" fill="#6ed0e0" fill-opacity="0.5" stroke="#6ed0e0" stroke-width="1.5"/>
<polygon points="662.5,1196.6 665.0,1220.4 667.5,1196.6" fill="#ef843c" fill-opacity="0.5" stroke="#ef843c" stroke-width="1.5"/>
<polygon points="662.5,1196.6 665.0,1212.0 667.5,1196.6" fill="#4a86c5" fill-opacity="0.5" stroke="#4a86c5" stroke-width="1.5"/>
<polygon points="1074.9,1196.6 1077.4,1177.1 1079.9,1196.6" fill="#7eb26d" fill-opacity="0.5" stroke="#7eb26d" stroke-width="1.5"/>
<polygon points="1280.2,1196.6 1282.7,1025.1 1285.2,1196.6" fill="#7eb26d" fill-opacity="0.5" stroke="#7eb26d" stroke-width="1.5"/>
<polygon points="1280.2,1196.6 1282.7,1204.2 1285.2,1196.6" fill="#ef843c" fill-opacity="0.5" stroke="#ef843c" stroke-width="1.5"/>
<polygon points="1282.5,1196.6 1284.5,1188.0 1286.5,1196.6" fill="#eab839" fill-opacity="0.5" stroke="#eab839" stroke-width="1.5"/>
<polygon points="1287.9,1196.6 1290.4,1186.9 1292.9,1196.6" fill="#eab839" fill-opacity="0.5" stroke="#eab839" stroke-width="1.5"/>
<polygon points="1325.5,1196.6 1328.0,1180.0 1330.5,1196.6" fill="#7eb26d" fill-opacity="0.5" stroke="#7eb26d" stroke-width="1.5"/>
<text transform="translate(33.30,996.70) scale(0.9899,1)" font-size="22.97" font-weight="normal" fill="#ccccdc" stroke="#ccccdc" stroke-width="0.45">6 Mb/s</text>
<text transform="translate(33.30,1065.80) scale(0.9899,1)" font-size="22.97" font-weight="normal" fill="#ccccdc" stroke="#ccccdc" stroke-width="0.45">4 Mb/s</text>
<text transform="translate(33.30,1135.30) scale(0.9899,1)" font-size="22.97" font-weight="normal" fill="#ccccdc" stroke="#ccccdc" stroke-width="0.45">2 Mb/s</text>
<text transform="translate(53.70,1204.50) scale(0.9752,1)" font-size="22.97" font-weight="normal" fill="#ccccdc" stroke="#ccccdc" stroke-width="0.45">0 b/s</text>
<text transform="translate(27.70,1274.00) scale(0.9675,1)" font-size="22.97" font-weight="normal" fill="#ccccdc" stroke="#ccccdc" stroke-width="0.45">-2 Mb/s</text>
<text transform="translate(150.35,1299.00) scale(0.8745,1)" font-size="23.69" font-weight="normal" fill="#ccccdc" stroke="#ccccdc" stroke-width="0.45">14:00</text>
<text transform="translate(263.22,1299.00) scale(0.8745,1)" font-size="23.69" font-weight="normal" fill="#ccccdc" stroke="#ccccdc" stroke-width="0.45">16:00</text>
<text transform="translate(376.09,1299.00) scale(0.8745,1)" font-size="23.69" font-weight="normal" fill="#ccccdc" stroke="#ccccdc" stroke-width="0.45">18:00</text>
<text transform="translate(488.96,1299.00) scale(0.8745,1)" font-size="23.69" font-weight="normal" fill="#ccccdc" stroke="#ccccdc" stroke-width="0.45">20:00</text>
<text transform="translate(601.83,1299.00) scale(0.8745,1)" font-size="23.69" font-weight="normal" fill="#ccccdc" stroke="#ccccdc" stroke-width="0.45">22:00</text>
<text transform="translate(714.70,1299.00) scale(0.8745,1)" font-size="23.69" font-weight="normal" fill="#ccccdc" stroke="#ccccdc" stroke-width="0.45">00:00</text>
<text transform="translate(827.57,1299.00) scale(0.8745,1)" font-size="23.69" font-weight="normal" fill="#ccccdc" stroke="#ccccdc" stroke-width="0.45">02:00</text>
<text transform="translate(940.44,1299.00) scale(0.8745,1)" font-size="23.69" font-weight="normal" fill="#ccccdc" stroke="#ccccdc" stroke-width="0.45">04:00</text>
<text transform="translate(1053.31,1299.00) scale(0.8745,1)" font-size="23.69" font-weight="normal" fill="#ccccdc" stroke="#ccccdc" stroke-width="0.45">06:00</text>
<text transform="translate(1166.18,1299.00) scale(0.8745,1)" font-size="23.69" font-weight="normal" fill="#ccccdc" stroke="#ccccdc" stroke-width="0.45">08:00</text>
<text transform="translate(1279.05,1299.00) scale(0.8745,1)" font-size="23.69" font-weight="normal" fill="#ccccdc" stroke="#ccccdc" stroke-width="0.45">10:00</text>
<text transform="translate(1391.92,1299.00) scale(0.8745,1)" font-size="23.69" font-weight="normal" fill="#ccccdc" stroke="#ccccdc" stroke-width="0.45">12:00</text>
<rect x="44.0" y="1332.5" width="26" height="8" rx="2.5" fill="#7eb26d"/>
<text transform="translate(84.20,1342.30) scale(0.9472,1)" font-size="22.97" font-weight="normal" fill="#ccccdc" stroke="#ccccdc" stroke-width="0.45">recv ens3</text>
<rect x="197.7" y="1332.5" width="26" height="8" rx="2.5" fill="#eab839"/>
<text transform="translate(237.90,1342.30) scale(0.9552,1)" font-size="22.97" font-weight="normal" fill="#ccccdc" stroke="#ccccdc" stroke-width="0.45">recv ens4</text>
<rect x="352.2" y="1332.5" width="26" height="8" rx="2.5" fill="#6ed0e0"/>
<text transform="translate(391.60,1342.30) scale(0.9670,1)" font-size="22.97" font-weight="normal" fill="#ccccdc" stroke="#ccccdc" stroke-width="0.45">recv lo</text>
<rect x="476.2" y="1332.5" width="26" height="8" rx="2.5" fill="#ef843c"/>
<text transform="translate(515.70,1342.30) scale(0.9669,1)" font-size="22.97" font-weight="normal" fill="#ccccdc" stroke="#ccccdc" stroke-width="0.45">trans ens3</text>
<rect x="638.0" y="1332.5" width="26" height="8" rx="2.5" fill="#e24d42"/>
<text transform="translate(678.20,1342.30) scale(0.9669,1)" font-size="22.97" font-weight="normal" fill="#ccccdc" stroke="#ccccdc" stroke-width="0.45">trans ens4</text>
<rect x="800.4" y="1332.5" width="26" height="8" rx="2.5" fill="#1f78c1"/>
<text transform="translate(840.60,1342.30) scale(0.9837,1)" font-size="22.97" font-weight="normal" fill="#ccccdc" stroke="#ccccdc" stroke-width="0.45">trans lo</text>
<line x1="26" y1="1351.2" x2="1498" y2="1351.2" stroke="#33342f" stroke-width="1.2"/>
<polygon points="1607.9,1098.4 1812.0,1098.2 1814.0,1097.2 2797.0,1097.9 2800.0,1091.0 2945.0,1091.0 2948.0,1099.9 2988.2,1099.9 2988.2,1266.2 1607.9,1266.2" fill="#475a42"/>
<rect x="1607.9" y="1250" width="1380.2999999999997" height="16.200000000000045" fill="#847e48"/>
<line x1="1671.8" y1="988.8" x2="1671.8" y2="1266.2" stroke="rgba(255,255,255,0.14)" stroke-width="2"/>
<line x1="1787.0" y1="988.8" x2="1787.0" y2="1266.2" stroke="rgba(255,255,255,0.14)" stroke-width="2"/>
<line x1="1902.2" y1="988.8" x2="1902.2" y2="1266.2" stroke="rgba(255,255,255,0.14)" stroke-width="2"/>
<line x1="2017.4" y1="988.8" x2="2017.4" y2="1266.2" stroke="rgba(255,255,255,0.14)" stroke-width="2"/>
<line x1="2132.6" y1="988.8" x2="2132.6" y2="1266.2" stroke="rgba(255,255,255,0.14)" stroke-width="2"/>
<line x1="2247.8" y1="988.8" x2="2247.8" y2="1266.2" stroke="rgba(255,255,255,0.14)" stroke-width="2"/>
<line x1="2362.9" y1="988.8" x2="2362.9" y2="1266.2" stroke="rgba(255,255,255,0.14)" stroke-width="2"/>
<line x1="2478.1" y1="988.8" x2="2478.1" y2="1266.2" stroke="rgba(255,255,255,0.14)" stroke-width="2"/>
<line x1="2593.3" y1="988.8" x2="2593.3" y2="1266.2" stroke="rgba(255,255,255,0.14)" stroke-width="2"/>
<line x1="2708.5" y1="988.8" x2="2708.5" y2="1266.2" stroke="rgba(255,255,255,0.14)" stroke-width="2"/>
<line x1="2823.7" y1="988.8" x2="2823.7" y2="1266.2" stroke="rgba(255,255,255,0.14)" stroke-width="2"/>
<line x1="2938.9" y1="988.8" x2="2938.9" y2="1266.2" stroke="rgba(255,255,255,0.14)" stroke-width="2"/>
<line x1="1607.9" y1="988.8" x2="2988.2" y2="988.8" stroke="rgba(255,255,255,0.14)" stroke-width="2"/>
<line x1="1607.9" y1="1058.2" x2="2988.2" y2="1058.2" stroke="rgba(255,255,255,0.14)" stroke-width="2"/>
<line x1="1607.9" y1="1127.5" x2="2988.2" y2="1127.5" stroke="rgba(255,255,255,0.14)" stroke-width="2"/>
<line x1="1607.9" y1="1196.8" x2="2988.2" y2="1196.8" stroke="rgba(255,255,255,0.14)" stroke-width="2"/>
<polyline points="1607.9,1098.4 1812.0,1098.2 1814.0,1097.2 2797.0,1097.9 2800.0,1091.0 2945.0,1091.0 2948.0,1099.9 2988.2,1099.9" fill="none" stroke="#7eb26d" stroke-width="2"/>
<line x1="1607.9" y1="1250.5" x2="2988.2" y2="1250.5" stroke="#dbb54f" stroke-width="2.2"/>
<line x1="1607.9" y1="1264.2" x2="2988.2" y2="1264.2" stroke="#8ccfd9" stroke-width="1.4"/>
<line x1="1607.9" y1="1266" x2="2988.2" y2="1266" stroke="#d98a4e" stroke-width="1.4"/>
<line x1="1682.7" y1="1265.8" x2="1882.9" y2="1265.8" stroke="#c9503f" stroke-width="2"/>
<line x1="2797" y1="1265.8" x2="2906.6" y2="1265.8" stroke="#c9503f" stroke-width="2"/>
<line x1="2939" y1="1265.8" x2="2988.2" y2="1265.8" stroke="#c9503f" stroke-width="2"/>
<circle cx="2157.9" cy="1265.5" r="2.5" fill="#e24d42"/>
<text transform="translate(1547.00,996.70) scale(0.8624,1)" font-size="22.97" font-weight="normal" fill="#ccccdc" stroke="#ccccdc" stroke-width="0.45">100%</text>
<text transform="translate(1559.10,1066.05) scale(0.8469,1)" font-size="22.97" font-weight="normal" fill="#ccccdc" stroke="#ccccdc" stroke-width="0.45">75%</text>
<text transform="translate(1560.00,1135.40) scale(0.8295,1)" font-size="22.97" font-weight="normal" fill="#ccccdc" stroke="#ccccdc" stroke-width="0.45">50%</text>
<text transform="translate(1559.30,1204.75) scale(0.8447,1)" font-size="22.97" font-weight="normal" fill="#ccccdc" stroke="#ccccdc" stroke-width="0.45">25%</text>
<text transform="translate(1570.00,1274.10) scale(0.7985,1)" font-size="22.97" font-weight="normal" fill="#ccccdc" stroke="#ccccdc" stroke-width="0.45">0%</text>
<text transform="translate(1644.35,1299.00) scale(0.8745,1)" font-size="23.69" font-weight="normal" fill="#ccccdc" stroke="#ccccdc" stroke-width="0.45">14:00</text>
<text transform="translate(1759.54,1299.00) scale(0.8745,1)" font-size="23.69" font-weight="normal" fill="#ccccdc" stroke="#ccccdc" stroke-width="0.45">16:00</text>
<text transform="translate(1874.73,1299.00) scale(0.8745,1)" font-size="23.69" font-weight="normal" fill="#ccccdc" stroke="#ccccdc" stroke-width="0.45">18:00</text>
<text transform="translate(1989.92,1299.00) scale(0.8745,1)" font-size="23.69" font-weight="normal" fill="#ccccdc" stroke="#ccccdc" stroke-width="0.45">20:00</text>
<text transform="translate(2105.11,1299.00) scale(0.8745,1)" font-size="23.69" font-weight="normal" fill="#ccccdc" stroke="#ccccdc" stroke-width="0.45">22:00</text>
<text transform="translate(2220.30,1299.00) scale(0.8745,1)" font-size="23.69" font-weight="normal" fill="#ccccdc" stroke="#ccccdc" stroke-width="0.45">00:00</text>
<text transform="translate(2335.49,1299.00) scale(0.8745,1)" font-size="23.69" font-weight="normal" fill="#ccccdc" stroke="#ccccdc" stroke-width="0.45">02:00</text>
<text transform="translate(2450.68,1299.00) scale(0.8745,1)" font-size="23.69" font-weight="normal" fill="#ccccdc" stroke="#ccccdc" stroke-width="0.45">04:00</text>
<text transform="translate(2565.87,1299.00) scale(0.8745,1)" font-size="23.69" font-weight="normal" fill="#ccccdc" stroke="#ccccdc" stroke-width="0.45">06:00</text>
<text transform="translate(2681.06,1299.00) scale(0.8745,1)" font-size="23.69" font-weight="normal" fill="#ccccdc" stroke="#ccccdc" stroke-width="0.45">08:00</text>
<text transform="translate(2796.25,1299.00) scale(0.8745,1)" font-size="23.69" font-weight="normal" fill="#ccccdc" stroke="#ccccdc" stroke-width="0.45">10:00</text>
<text transform="translate(2911.44,1299.00) scale(0.8745,1)" font-size="23.69" font-weight="normal" fill="#ccccdc" stroke="#ccccdc" stroke-width="0.45">12:00</text>
<rect x="1562.2" y="1332.5" width="26" height="8" rx="2.5" fill="#7eb26d"/>
<text transform="translate(1601.60,1342.30) scale(1.0000,1)" font-size="22.97" font-weight="normal" fill="#ccccdc" stroke="#ccccdc" stroke-width="0.45">/</text>
<rect x="1630.2" y="1332.5" width="26" height="8" rx="2.5" fill="#eab839"/>
<text transform="translate(1669.60,1342.30) scale(1.0800,1)" font-size="22.97" font-weight="normal" fill="#ccccdc" stroke="#ccccdc" stroke-width="0.45">/boot/efi</text>
<rect x="1776.9" y="1332.5" width="26" height="8" rx="2.5" fill="#6ed0e0"/>
<text transform="translate(1817.10,1342.30) scale(1.0223,1)" font-size="22.97" font-weight="normal" fill="#ccccdc" stroke="#ccccdc" stroke-width="0.45">/run</text>
<rect x="1877.4" y="1332.5" width="26" height="8" rx="2.5" fill="#ef843c"/>
<text transform="translate(1916.80,1342.30) scale(1.0630,1)" font-size="22.97" font-weight="normal" fill="#ccccdc" stroke="#ccccdc" stroke-width="0.45">/run/lock</text>
<rect x="2027.4" y="1332.5" width="26" height="8" rx="2.5" fill="#e24d42"/>
<text transform="translate(2066.30,1342.30) scale(1.0363,1)" font-size="22.97" font-weight="normal" fill="#ccccdc" stroke="#ccccdc" stroke-width="0.45">/run/user/1000</text>
<path d="M1544.4 1351.2 H3016.5 V1318.6" fill="none" stroke="#33342f" stroke-width="1.2"/>
</svg></body></html>
